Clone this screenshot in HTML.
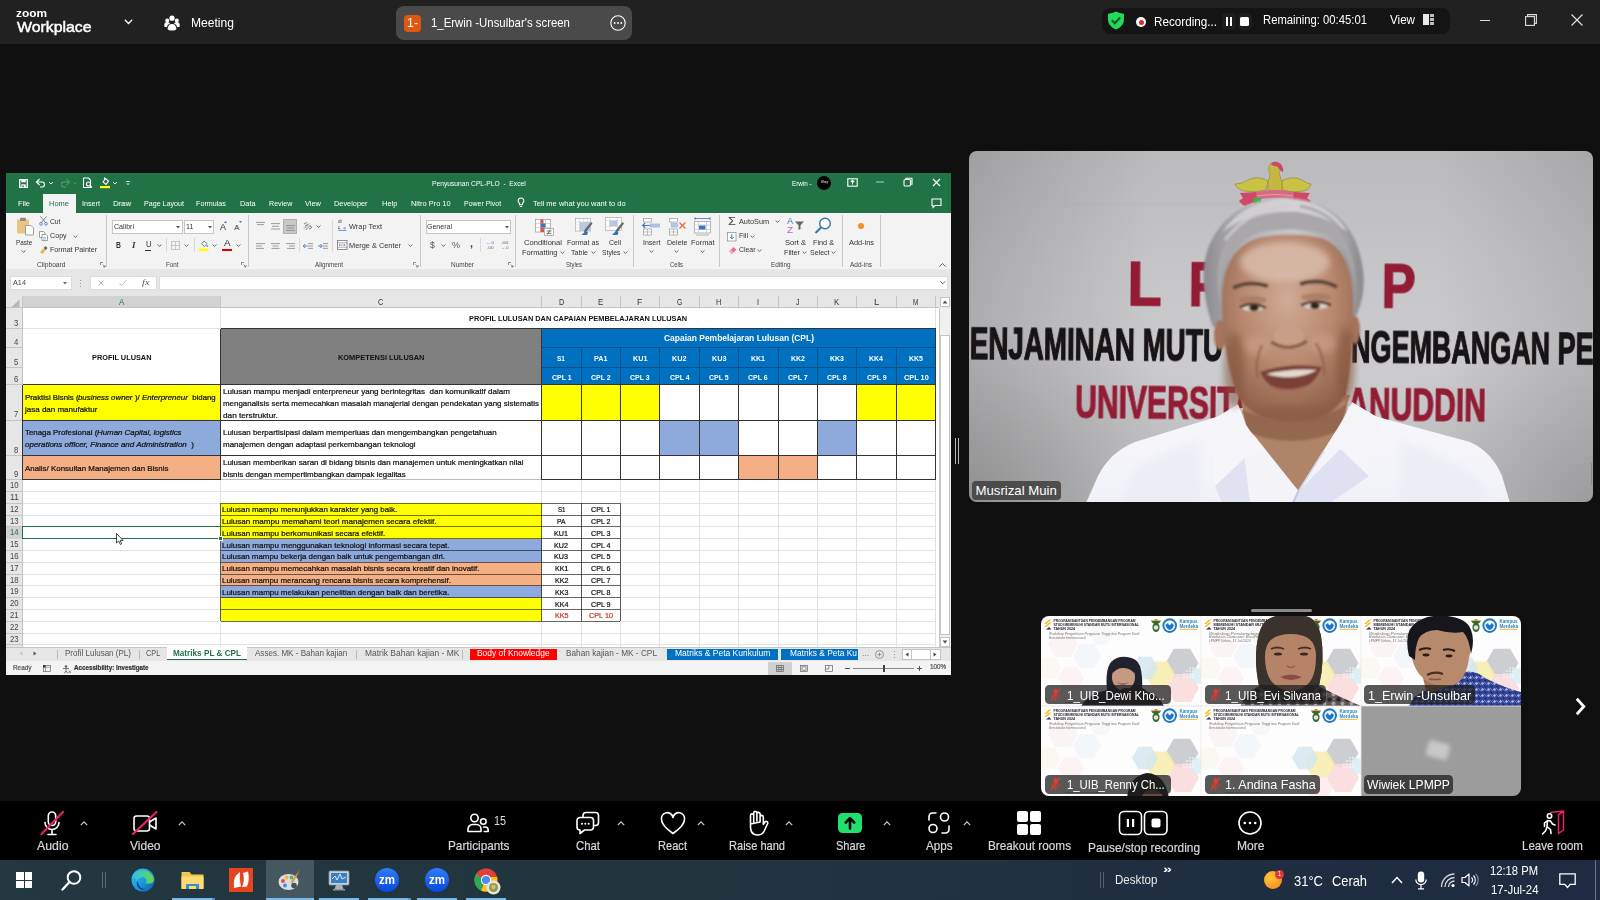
<!DOCTYPE html>
<html lang="en">
<head>
<meta charset="utf-8">
<title>Zoom Workplace</title>
<style>
*{box-sizing:border-box;margin:0;padding:0}
html,body{width:1600px;height:900px;overflow:hidden;background:#0f0f0f;font-family:"Liberation Sans",sans-serif;color:#fff}
.abs{position:absolute}
.t{position:absolute;white-space:pre;line-height:1}
svg{overflow:visible}
</style>
</head>
<body>
<!-- top -->
<div class="abs" style="left:0.0px;top:0.0px;width:1600.0px;height:44.0px;background:#212121;"></div>
<span class="t" style="left:16.0px;top:7.7px;font-size:11.5px;color:#fff;font-weight:bold;transform:scaleX(1.032);transform-origin:0 50%;">zoom</span>
<span class="t" style="left:16.5px;top:20.2px;font-size:14.5px;color:#fff;transform:scaleX(1.092);transform-origin:0 50%;-webkit-text-stroke:0.45px #fff;">Workplace</span>
<svg class="abs" style="left:123.5px;top:19.0px;" width="9" height="6" viewBox="0 0 9 6"><path d="M0.800 0.800l3.700 3.700 3.700-3.700" stroke="#fff" fill="none" stroke-width="1.300"/></svg>
<svg class="abs" style="left:164.0px;top:15.0px;" width="16" height="16" viewBox="0 0 16 16"><g fill="#fff"><circle cx="8" cy="3.200" r="2.600"/><circle cx="3.200" cy="5.400" r="2"/><circle cx="12.800" cy="5.400" r="2"/><path d="M0.400 10.500a2.800 2.800 0 0 1 5.600-1.200h-1.500q-1.500 1.200-1.500 2.700h-2.600zM15.600 10.500a2.800 2.800 0 0 0-5.600-1.200h1.500q1.500 1.200 1.500 2.700h2.600z"/><path d="M3.600 13.500a4.400 4.400 0 0 1 8.800 0q0 2-4.400 2t-4.400-2z"/></g></svg>
<span class="t" style="left:191.0px;top:15.5px;font-size:13.6px;color:#fff;transform:scaleX(0.889);transform-origin:0 50%;">Meeting</span>
<div class="abs" style="left:396px;top:6px;width:236px;height:34px;border-radius:8px;background:#4a4a4a"></div>
<div class="abs" style="left:404px;top:15px;width:17px;height:17px;border-radius:4px;background:#e0570f"></div>
<span class="t" style="left:407.0px;top:17.0px;font-size:12px;color:#fff;transform:scaleX(1.031);transform-origin:0 50%;">1-</span>
<span class="t" style="left:431.0px;top:15.8px;font-size:13.6px;color:#fff;transform:scaleX(0.838);transform-origin:0 50%;">1_Erwin -Unsulbar's screen</span>
<svg class="abs" style="left:610.0px;top:15.0px;" width="16" height="16" viewBox="0 0 16 16"><circle cx="8" cy="8" r="7.200" stroke="#fff" fill="none" stroke-width="1.100"/><circle cx="4.700" cy="8" r="0.900" fill="#fff"/><circle cx="8" cy="8" r="0.900" fill="#fff"/><circle cx="11.300" cy="8" r="0.900" fill="#fff"/></svg>
<div class="abs" style="left:1102px;top:8px;width:348px;height:26px;border-radius:8px;background:#141414"></div>
<svg class="abs" style="left:1107.0px;top:11.0px;" width="18" height="19" viewBox="0 0 18 19"><path d="M9 0.500q3.500 2 8 2.200v5.800q0 6.500-8 10q-8-3.500-8-10v-5.800q4.500-0.200 8-2.200z" fill="#23d959"/><path d="M4.800 9.300l3 3 5.400-5.800" stroke="#0e5a26" stroke-width="2" fill="none"/></svg>
<div class="abs" style="left:1136px;top:17px;width:10px;height:10px;border-radius:50%;background:#fff"></div>
<div class="abs" style="left:1138.500px;top:19.500px;width:5px;height:5px;border-radius:50%;background:#e02828"></div>
<span class="t" style="left:1154.0px;top:15.1px;font-size:13.5px;color:#fff;transform:scaleX(0.866);transform-origin:0 50%;">Recording...</span>
<div class="abs" style="left:1221.500px;top:13px;width:14px;height:17px;border-radius:4px;background:#1d1d1d"></div>
<div class="abs" style="left:1225.7px;top:17.0px;width:2.3px;height:9.0px;background:#fff;"></div>
<div class="abs" style="left:1230.0px;top:17.0px;width:2.3px;height:9.0px;background:#fff;"></div>
<div class="abs" style="left:1237.500px;top:13px;width:14px;height:17px;border-radius:4px;background:#1d1d1d"></div>
<div class="abs" style="left:1240.300px;top:17.300px;width:8.500px;height:8.500px;border-radius:1.500px;background:#fff"></div>
<span class="t" style="left:1263.0px;top:14.3px;font-size:12.6px;color:#fff;transform:scaleX(0.894);transform-origin:0 50%;">Remaining: 00:45:01</span>
<span class="t" style="left:1390.0px;top:14.3px;font-size:12.6px;color:#fff;transform:scaleX(0.923);transform-origin:0 50%;">View</span>
<svg class="abs" style="left:1423.0px;top:14.0px;" width="11" height="11" viewBox="0 0 11 11"><rect x="0" y="0" width="6" height="11" fill="#e8e8e8"/><g fill="#bdbdbd"><rect x="7" y="0" width="4" height="3"/><rect x="7" y="4" width="4" height="3"/><rect x="7" y="8" width="4" height="3"/></g></svg>
<div class="abs" style="left:1480.0px;top:19.5px;width:10.0px;height:1.2px;background:#ddd;"></div>
<svg class="abs" style="left:1525.0px;top:14.0px;" width="12" height="12" viewBox="0 0 12 12"><rect x="0.600" y="2.600" width="8.800" height="8.800" stroke="#ddd" fill="none" stroke-width="1.100"/><path d="M2.600 2.600v-2h8.800v8.800h-2" stroke="#ddd" fill="none" stroke-width="1.100"/></svg>
<svg class="abs" style="left:1571.0px;top:14.0px;" width="12" height="12" viewBox="0 0 12 12"><path d="M0.500 0.500l11 11M11.500 0.500l-11 11" stroke="#ddd" stroke-width="1.200"/></svg>
<!-- excel1 -->
<div class="abs" style="left:6.0px;top:173.0px;width:945.0px;height:502.0px;background:#fff;"></div>
<div class="abs" style="left:6.0px;top:173.0px;width:945.0px;height:40.0px;background:#217346;"></div>
<div class="abs" style="left:6.0px;top:213.0px;width:945.0px;height:56.0px;background:#f3f3f3;"></div>
<div class="abs" style="left:6.0px;top:269.0px;width:945.0px;height:27.0px;background:#e6e6e6;"></div>
<svg class="abs" style="left:18.5px;top:178.5px;" width="10" height="9" viewBox="0 0 10 9"><path d="M0.700 0.700h7.600v7.600h-7.600z" stroke="#fff" fill="none" stroke-width="1.300"/><rect x="2.300" y="0.700" width="4.400" height="2.600" fill="#fff"/><rect x="2.300" y="5.300" width="4.400" height="3" fill="#fff"/><rect x="3.400" y="6.300" width="1.300" height="2" fill="#217346"/></svg>
<svg class="abs" style="left:35.0px;top:178.0px;" width="12" height="10" viewBox="0 0 12 10"><path d="M1.5 4h5.5a2.5 2.5 0 0 1 0 5h-2" stroke="#fff" fill="none" stroke-width="1.1" stroke-width="1.4"/><path d="M4.5 1l-3 3 3 3" stroke="#fff" fill="none" stroke-width="1.1" stroke-width="1.4"/></svg>
<svg class="abs" style="left:48.0px;top:181.0px;" width="6" height="4" viewBox="0 0 6 4"><path d="M1 1l2 2 2-2" stroke="#fff" fill="none" stroke-width="0.9"/></svg>
<svg class="abs" style="left:59.0px;top:178.0px;" width="12" height="10" viewBox="0 0 12 10"><path d="M10.500 4h-5.500a2.500 2.500 0 0 0 0 5h2" stroke="#4c9068" fill="none" stroke-width="1.400"/><path d="M7.500 1l3 3-3 3" stroke="#4c9068" fill="none" stroke-width="1.4"/></svg>
<svg class="abs" style="left:72.0px;top:181.0px;" width="6" height="4" viewBox="0 0 6 4"><path d="M1 1l2 2 2-2" stroke="#4c9068" fill="none" stroke-width="0.9"/></svg>
<svg class="abs" style="left:82.0px;top:177.0px;" width="12" height="12" viewBox="0 0 12 12"><path d="M1.500 1h5l2 2v7.500h-7z" stroke="#fff" fill="none" stroke-width="1.1"/><circle cx="6.500" cy="7" r="2" stroke="#fff" fill="none" stroke-width="1.1"/><path d="M8 8.500l2 2" stroke="#fff" fill="none" stroke-width="1.1"/></svg>
<svg class="abs" style="left:99.0px;top:176.0px;" width="12" height="13" viewBox="0 0 12 13"><path d="M4 6l2.500-3.500 3 2.500-2.500 3.500z" stroke="#fff" fill="none" stroke-width="1.1"/><path d="M5.500 3.500v-2" stroke="#fff" fill="none" stroke-width="1.1"/><rect x="1" y="10" width="10" height="2.200" fill="#ffff00"/></svg>
<svg class="abs" style="left:112.0px;top:181.0px;" width="6" height="4" viewBox="0 0 6 4"><path d="M1 1l2 2 2-2" stroke="#fff" fill="none" stroke-width="0.9"/></svg>
<svg class="abs" style="left:125.0px;top:180.0px;" width="6" height="6" viewBox="0 0 6 6"><path d="M1 1.500h4" stroke="#fff" stroke-width="0.9"/><path d="M1.500 3.500l1.500 1.500 1.500-1.500z" fill="#fff"/></svg>
<span class="t" style="left:431.5px;top:180.1px;font-size:7.5px;color:#fff;transform:scaleX(0.892);transform-origin:0 50%;">Penyusunan CPL-PLO  -  Excel</span>
<span class="t" style="left:791.5px;top:179.9px;font-size:7.5px;color:#fff;transform:scaleX(0.836);transform-origin:0 50%;">Erwin -</span>
<div class="abs" style="left:817px;top:176px;width:14px;height:14px;border-radius:50%;background:#000"></div>
<span class="t" style="left:820.5px;top:182.1px;font-size:2.6px;color:#fff;font-style:italic;transform:scaleX(0.989);transform-origin:0 50%;">Wowy</span>
<svg class="abs" style="left:847.0px;top:178.0px;" width="11" height="9" viewBox="0 0 11 9"><rect x="0.8" y="0.8" width="9.4" height="7.4" stroke="#fff" fill="none" stroke-width="1.1"/><path d="M5.500 6.500v-4M3.800 4l1.700-1.700 1.700 1.700" stroke="#fff" fill="none" stroke-width="1.1"/></svg>
<svg class="abs" style="left:876.0px;top:181.0px;" width="8" height="2" viewBox="0 0 8 2"><path d="M0 1h8" stroke="#9cc4ae" stroke-width="1.2"/></svg>
<svg class="abs" style="left:903.0px;top:177.0px;" width="10" height="10" viewBox="0 0 10 10"><rect x="1" y="2.500" width="6.500" height="6.500" rx="1.200" stroke="#fff" fill="none" stroke-width="1.1"/><path d="M3 2.500v-1.200h6v6h-1.500" stroke="#fff" fill="none" stroke-width="1.1"/></svg>
<svg class="abs" style="left:932.0px;top:178.0px;" width="9" height="9" viewBox="0 0 9 9"><path d="M1 1l7 7M8 1l-7 7" stroke="#fff" stroke-width="1.1"/></svg>
<svg class="abs" style="left:931.0px;top:198.0px;" width="11" height="11" viewBox="0 0 11 11"><path d="M1 1h9v6.500h-6l-2 2v-2h-1z" stroke="#fff" fill="none" stroke-width="1.1" stroke-width="0.9"/></svg>
<div class="abs" style="left:43.0px;top:194.0px;width:33.0px;height:19.0px;background:#f3f3f3;"></div>
<span class="t" style="left:18.0px;top:200.0px;font-size:7.7px;color:#fff;transform:scaleX(0.967);transform-origin:0 50%;">File</span>
<span class="t" style="left:49.0px;top:200.0px;font-size:7.7px;color:#217346;transform:scaleX(0.974);transform-origin:0 50%;">Home</span>
<span class="t" style="left:82.0px;top:200.0px;font-size:7.7px;color:#fff;transform:scaleX(0.935);transform-origin:0 50%;">Insert</span>
<span class="t" style="left:113.0px;top:200.0px;font-size:7.7px;color:#fff;">Draw</span>
<span class="t" style="left:144.0px;top:200.0px;font-size:7.7px;color:#fff;transform:scaleX(0.925);transform-origin:0 50%;">Page Layout</span>
<span class="t" style="left:196.0px;top:200.0px;font-size:7.7px;color:#fff;transform:scaleX(0.935);transform-origin:0 50%;">Formulas</span>
<span class="t" style="left:239.6px;top:200.0px;font-size:7.7px;color:#fff;transform:scaleX(0.959);transform-origin:0 50%;">Data</span>
<span class="t" style="left:268.7px;top:200.0px;font-size:7.7px;color:#fff;transform:scaleX(0.927);transform-origin:0 50%;">Review</span>
<span class="t" style="left:305.0px;top:200.0px;font-size:7.7px;color:#fff;transform:scaleX(0.967);transform-origin:0 50%;">View</span>
<span class="t" style="left:334.4px;top:200.0px;font-size:7.7px;color:#fff;transform:scaleX(0.957);transform-origin:0 50%;">Developer</span>
<span class="t" style="left:381.5px;top:200.0px;font-size:7.7px;color:#fff;transform:scaleX(0.979);transform-origin:0 50%;">Help</span>
<span class="t" style="left:410.5px;top:200.0px;font-size:7.7px;color:#fff;transform:scaleX(0.966);transform-origin:0 50%;">Nitro Pro 10</span>
<span class="t" style="left:463.6px;top:200.0px;font-size:7.7px;color:#fff;transform:scaleX(0.905);transform-origin:0 50%;">Power Pivot</span>
<span class="t" style="left:533.2px;top:200.0px;font-size:7.7px;color:#fff;transform:scaleX(0.977);transform-origin:0 50%;">Tell me what you want to do</span>
<svg class="abs" style="left:517.0px;top:197.0px;" width="8" height="12" viewBox="0 0 8 12"><path d="M4 1a2.800 2.800 0 0 0-1.500 5.200v1.500h3v-1.500a2.800 2.800 0 0 0-1.500-5.200zM2.800 9.500h2.400" stroke="#fff" fill="none" stroke-width="1.1" stroke-width="0.9"/></svg>
<!-- excel2 -->
<svg class="abs" style="left:16.0px;top:217.0px;" width="19" height="19" viewBox="0 0 19 19"><rect x="1" y="2.500" width="12" height="14" rx="1" fill="#e8c580"/><rect x="4" y="0.800" width="6" height="3.200" rx="0.800" fill="#8c8c8c"/><path d="M9.500 8.500h5.500l2.500 2.500v7h-8z" fill="#fff" stroke="#8a8a8a" stroke-width="0.8"/></svg>
<span class="t" style="left:15.7px;top:238.7px;font-size:8.0px;color:#333;transform:scaleX(0.797);transform-origin:0 50%;">Paste</span>
<svg class="abs" style="left:20.7px;top:250.0px;" width="5" height="3" viewBox="0 0 5 3"><path d="M0.600 0.500l1.900 1.900 1.900-1.900" stroke="#555" fill="none" stroke-width="0.9"/></svg>
<svg class="abs" style="left:39.0px;top:216.0px;" width="9" height="10" viewBox="0 0 9 10"><path d="M1.500 0.500l5 6M7.500 0.500l-5 6" stroke="#666" stroke-width="0.8" fill="none"/><circle cx="2" cy="7.800" r="1.400" stroke="#4472c4" fill="none" stroke-width="0.8"/><circle cx="7" cy="7.800" r="1.400" stroke="#4472c4" fill="none" stroke-width="0.8"/></svg>
<span class="t" style="left:50.3px;top:217.8px;font-size:8.0px;color:#333;transform:scaleX(0.843);transform-origin:0 50%;">Cut</span>
<svg class="abs" style="left:39.0px;top:231.0px;" width="9" height="10" viewBox="0 0 9 10"><path d="M0.500 0.500h4l1.500 1.500v4.500h-5.500z" stroke="#777" fill="#fff" stroke-width="0.7"/><path d="M3 3.500h4l1.500 1.500v4.500h-5.500z" stroke="#777" fill="#fff" stroke-width="0.7"/><path d="M4 6.500h3M4 8h3" stroke="#4472c4" stroke-width="0.5"/></svg>
<span class="t" style="left:50.3px;top:232.2px;font-size:8.0px;color:#333;transform:scaleX(0.894);transform-origin:0 50%;">Copy</span>
<svg class="abs" style="left:72.8px;top:234.5px;" width="5" height="3" viewBox="0 0 5 3"><path d="M0.600 0.500l1.900 1.900 1.900-1.900" stroke="#555" fill="none" stroke-width="0.9"/></svg>
<svg class="abs" style="left:39.0px;top:245.0px;" width="9" height="9" viewBox="0 0 9 9"><path d="M1 7.500l3-4 2.500 2-3 3.500z" fill="#e8b64c"/><path d="M4.500 3l2-2 2 2-1.800 2.200z" fill="#666"/></svg>
<span class="t" style="left:50.3px;top:246.4px;font-size:8.0px;color:#333;transform:scaleX(0.892);transform-origin:0 50%;">Format Painter</span>
<span class="t" style="left:36.7px;top:260.8px;font-size:7.3px;color:#444;transform:scaleX(0.912);transform-origin:0 50%;">Clipboard</span>
<svg class="abs" style="left:99.5px;top:262.0px;" width="6" height="6" viewBox="0 0 6 6"><path d="M0.500 3v-2.500h2.500M2.500 2.500l2.500 2.500M5 3v2h-2" stroke="#666" fill="none" stroke-width="0.7"/></svg>
<div class="abs" style="left:106.0px;top:215.0px;width:1.0px;height:52.0px;background:#c8c8c8;"></div>
<div class="abs" style="left:112px;top:219.500px;width:70.500px;height:14px;background:#fff;border:1px solid #c6c6c6"></div>
<span class="t" style="left:114.0px;top:222.7px;font-size:8.0px;color:#333;transform:scaleX(0.882);transform-origin:0 50%;">Calibri</span>
<svg class="abs" style="left:175.8px;top:225.5px;" width="4" height="2.5" viewBox="0 0 4 2.5"><path d="M0 0h4l-2 2.500z" fill="#555"/></svg>
<div class="abs" style="left:184px;top:219.500px;width:30px;height:14px;background:#fff;border:1px solid #c6c6c6"></div>
<span class="t" style="left:186.0px;top:222.7px;font-size:8.0px;color:#333;transform:scaleX(0.879);transform-origin:0 50%;">11</span>
<svg class="abs" style="left:207.5px;top:225.5px;" width="4" height="2.5" viewBox="0 0 4 2.5"><path d="M0 0h4l-2 2.500z" fill="#555"/></svg>
<span class="t" style="left:219.5px;top:222.9px;font-size:8.5px;color:#333;transform:scaleX(1.058);transform-origin:0 50%;">A</span>
<svg class="abs" style="left:224.0px;top:220.5px;" width="3" height="2" viewBox="0 0 3 2"><path d="M0 2l1.500-2 1.500 2z" fill="#4472c4"/></svg>
<span class="t" style="left:234.3px;top:223.7px;font-size:7.5px;color:#333;">A</span>
<svg class="abs" style="left:238.5px;top:221.0px;" width="3" height="2" viewBox="0 0 3 2"><path d="M0 0l1.500 2 1.500-2z" fill="#4472c4"/></svg>
<span class="t" style="left:115.7px;top:241.6px;font-size:8.2px;color:#333;font-weight:bold;transform:scaleX(0.827);transform-origin:0 50%;">B</span>
<span class="t" style="left:131.5px;top:241.4px;font-size:8.5px;color:#333;font-weight:bold;font-style:italic;font-family:'Liberation Serif',serif;transform:scaleX(1.058);transform-origin:0 50%;">I</span>
<span class="t" style="left:145.5px;top:241.3px;font-size:8.2px;color:#333;transform:scaleX(0.929);transform-origin:0 50%;">U</span>
<div class="abs" style="left:145.3px;top:250.0px;width:6.0px;height:0.8px;background:#333;"></div>
<svg class="abs" style="left:156.8px;top:244.2px;" width="5" height="3" viewBox="0 0 5 3"><path d="M0.600 0.500l1.900 1.900 1.900-1.900" stroke="#555" fill="none" stroke-width="0.9"/></svg>
<div class="abs" style="left:166.0px;top:238.0px;width:0.8px;height:14.0px;background:#d8d8d8;"></div>
<svg class="abs" style="left:171.0px;top:240.5px;" width="9" height="9" viewBox="0 0 9 9"><rect x="0.400" y="0.400" width="8.200" height="8.200" stroke="#bbb" fill="none" stroke-width="0.8"/><path d="M4.500 0.400v8.200M0.400 4.500h8.200" stroke="#bbb" stroke-width="0.8"/></svg>
<svg class="abs" style="left:184.0px;top:244.2px;" width="5" height="3" viewBox="0 0 5 3"><path d="M0.600 0.500l1.900 1.900 1.900-1.900" stroke="#555" fill="none" stroke-width="0.9"/></svg>
<div class="abs" style="left:194.0px;top:238.0px;width:0.8px;height:14.0px;background:#d8d8d8;"></div>
<svg class="abs" style="left:198.0px;top:239.0px;" width="11" height="13" viewBox="0 0 11 13"><path d="M3.500 5l2.500-3 3 2.500-2.500 3z" stroke="#666" fill="#fff" stroke-width="0.8"/><path d="M9 5.500q1.500 2 0 2.500q-1.200-0.500 0-2.500z" fill="#4472c4"/><rect x="0.500" y="9.500" width="10" height="2.400" fill="#ffff00"/></svg>
<svg class="abs" style="left:211.7px;top:244.2px;" width="5" height="3" viewBox="0 0 5 3"><path d="M0.600 0.500l1.900 1.900 1.900-1.900" stroke="#555" fill="none" stroke-width="0.9"/></svg>
<span class="t" style="left:224.0px;top:239.2px;font-size:8.5px;color:#333;transform:scaleX(1.164);transform-origin:0 50%;">A</span>
<div class="abs" style="left:222.3px;top:248.5px;width:10.0px;height:2.4px;background:#e00000;"></div>
<svg class="abs" style="left:235.8px;top:244.2px;" width="5" height="3" viewBox="0 0 5 3"><path d="M0.600 0.500l1.900 1.900 1.900-1.900" stroke="#555" fill="none" stroke-width="0.9"/></svg>
<span class="t" style="left:165.6px;top:260.8px;font-size:7.3px;color:#444;transform:scaleX(0.863);transform-origin:0 50%;">Font</span>
<svg class="abs" style="left:241.0px;top:262.0px;" width="6" height="6" viewBox="0 0 6 6"><path d="M0.500 3v-2.500h2.500M2.500 2.500l2.500 2.500M5 3v2h-2" stroke="#666" fill="none" stroke-width="0.7"/></svg>
<div class="abs" style="left:248.0px;top:215.0px;width:1.0px;height:52.0px;background:#c8c8c8;"></div>
<svg class="abs" style="left:256.0px;top:220.0px;" width="9" height="12" viewBox="0 0 9 12"><path d="M0 2.400h9M1 4.600h7" stroke="#858585" stroke-width="0.8"/></svg>
<svg class="abs" style="left:271.0px;top:220.0px;" width="9" height="12" viewBox="0 0 9 12"><path d="M0 3.600h9M1 6.300h7M0 9h9" stroke="#858585" stroke-width="0.8"/></svg>
<div class="abs" style="left:283.0px;top:219.0px;width:14.0px;height:14.5px;background:#c8c8c8;border:1px solid #b0b0b0"></div>
<svg class="abs" style="left:285.5px;top:220.0px;" width="9" height="12" viewBox="0 0 9 12"><path d="M0 5.600h9M1 8h7M0 10.400h9" stroke="#858585" stroke-width="0.8"/></svg>
<svg class="abs" style="left:303.0px;top:221.0px;" width="10" height="10" viewBox="0 0 10 10"><path d="M1 7.500l5-5M2.500 9l5-5M1 3l3-1.500M2 5l3-1.500" stroke="#666" stroke-width="0.8"/><path d="M6 8l3-1.500-2.500-1.500" fill="none" stroke="#666" stroke-width="0.8"/></svg>
<svg class="abs" style="left:315.5px;top:225.0px;" width="5" height="3" viewBox="0 0 5 3"><path d="M0.600 0.500l1.900 1.900 1.900-1.900" stroke="#555" fill="none" stroke-width="0.9"/></svg>
<svg class="abs" style="left:256.0px;top:241.0px;" width="9" height="9" viewBox="0 0 9 9"><path d="M0 2.600h9M0 5h6M0 7.400h8" stroke="#858585" stroke-width="0.8"/></svg>
<svg class="abs" style="left:271.0px;top:241.0px;" width="9" height="9" viewBox="0 0 9 9"><path d="M0 2.600h9M1.500 5h6M0.500 7.400h8" stroke="#858585" stroke-width="0.8"/></svg>
<svg class="abs" style="left:286.0px;top:241.0px;" width="9" height="9" viewBox="0 0 9 9"><path d="M0 2.600h9M3 5h6M1 7.400h8" stroke="#858585" stroke-width="0.8"/></svg>
<div class="abs" style="left:299.0px;top:238.0px;width:0.8px;height:14.0px;background:#d8d8d8;"></div>
<svg class="abs" style="left:303.0px;top:241.0px;" width="10" height="9" viewBox="0 0 10 9"><path d="M5 2.600h5M5 5h5M5 7.400h5" stroke="#858585" stroke-width="0.8"/><path d="M4.500 5h-4M2.200 3l-2 2 2 2" stroke="#4472c4" fill="none" stroke-width="0.9"/></svg>
<svg class="abs" style="left:318.0px;top:241.0px;" width="10" height="9" viewBox="0 0 10 9"><path d="M5 2.600h5M5 5h5M5 7.400h5" stroke="#858585" stroke-width="0.8"/><path d="M0 5h4M2.300 3l2 2-2 2" stroke="#4472c4" fill="none" stroke-width="0.9"/></svg>
<div class="abs" style="left:332.0px;top:220.0px;width:0.8px;height:32.0px;background:#d8d8d8;"></div>
<svg class="abs" style="left:337.5px;top:221.0px;" width="9" height="10" viewBox="0 0 9 10"><path d="M0.500 9.500h8" stroke="#4472c4" stroke-width="0.7"/><path d="M5 7.200h2.500M6.300 6l1.300 1.200-1.300 1.200M0.500 6.500v1.400h2" stroke="#4472c4" stroke-width="0.6" fill="none"/></svg>
<span class="t" style="left:338.0px;top:220.3px;font-size:4.5px;color:#555;transform:scaleX(0.799);transform-origin:0 50%;">ab</span>
<span class="t" style="left:338.0px;top:225.6px;font-size:4.5px;color:#555;transform:scaleX(0.889);transform-origin:0 50%;">c</span>
<span class="t" style="left:349.0px;top:222.9px;font-size:8.0px;color:#333;transform:scaleX(0.924);transform-origin:0 50%;">Wrap Text</span>
<svg class="abs" style="left:337.0px;top:240.0px;" width="10.5" height="10" viewBox="0 0 10.5 10"><rect x="0.400" y="0.400" width="9.600" height="9" stroke="#777" fill="#fff" stroke-width="0.8"/><path d="M0.400 2.800h9.600M0.400 7.200h9.600" stroke="#777" stroke-width="0.6"/><path d="M2 5h6M3 4l-1 1 1 1M7 4l1 1-1 1" stroke="#4472c4" stroke-width="0.6" fill="none"/></svg>
<span class="t" style="left:349.0px;top:241.9px;font-size:8.0px;color:#333;transform:scaleX(0.921);transform-origin:0 50%;">Merge &amp; Center</span>
<svg class="abs" style="left:407.5px;top:244.2px;" width="5" height="3" viewBox="0 0 5 3"><path d="M0.600 0.500l1.900 1.900 1.900-1.900" stroke="#555" fill="none" stroke-width="0.9"/></svg>
<span class="t" style="left:315.0px;top:260.8px;font-size:7.3px;color:#444;transform:scaleX(0.863);transform-origin:0 50%;">Alignment</span>
<svg class="abs" style="left:413.0px;top:262.0px;" width="6" height="6" viewBox="0 0 6 6"><path d="M0.500 3v-2.500h2.500M2.500 2.500l2.500 2.500M5 3v2h-2" stroke="#666" fill="none" stroke-width="0.7"/></svg>
<div class="abs" style="left:420.0px;top:215.0px;width:1.0px;height:52.0px;background:#c8c8c8;"></div>
<div class="abs" style="left:425.500px;top:219.500px;width:85.500px;height:14px;background:#fff;border:1px solid #c6c6c6"></div>
<span class="t" style="left:427.0px;top:222.7px;font-size:8.0px;color:#333;transform:scaleX(0.878);transform-origin:0 50%;">General</span>
<svg class="abs" style="left:504.5px;top:225.5px;" width="4" height="2.5" viewBox="0 0 4 2.5"><path d="M0 0h4l-2 2.500z" fill="#555"/></svg>
<span class="t" style="left:429.5px;top:241.2px;font-size:9px;color:#555;transform:scaleX(0.959);transform-origin:0 50%;">$</span>
<svg class="abs" style="left:440.5px;top:244.2px;" width="5" height="3" viewBox="0 0 5 3"><path d="M0.600 0.500l1.900 1.900 1.900-1.900" stroke="#555" fill="none" stroke-width="0.9"/></svg>
<span class="t" style="left:452.0px;top:241.4px;font-size:8.5px;color:#555;transform:scaleX(1.059);transform-origin:0 50%;">%</span>
<span class="t" style="left:469.5px;top:238.7px;font-size:10px;color:#444;font-weight:bold;transform:scaleX(1.080);transform-origin:0 50%;">,</span>
<div class="abs" style="left:480.0px;top:238.0px;width:0.8px;height:14.0px;background:#d8d8d8;"></div>
<span class="t" style="left:485.6px;top:241.3px;font-size:4.2px;color:#4472c4;transform:scaleX(1.026);transform-origin:0 50%;">←.0</span>
<span class="t" style="left:487.0px;top:246.0px;font-size:4.2px;color:#666;transform:scaleX(1.113);transform-origin:0 50%;">.00</span>
<span class="t" style="left:500.5px;top:241.3px;font-size:4.2px;color:#666;transform:scaleX(1.285);transform-origin:0 50%;">.00</span>
<span class="t" style="left:500.5px;top:246.0px;font-size:4.2px;color:#4472c4;transform:scaleX(0.974);transform-origin:0 50%;">→.0</span>
<span class="t" style="left:451.0px;top:260.8px;font-size:7.3px;color:#444;transform:scaleX(0.886);transform-origin:0 50%;">Number</span>
<svg class="abs" style="left:508.0px;top:262.0px;" width="6" height="6" viewBox="0 0 6 6"><path d="M0.500 3v-2.500h2.500M2.500 2.500l2.500 2.500M5 3v2h-2" stroke="#666" fill="none" stroke-width="0.7"/></svg>
<div class="abs" style="left:515.0px;top:215.0px;width:1.0px;height:52.0px;background:#c8c8c8;"></div>
<svg class="abs" style="left:535.0px;top:219.0px;" width="19" height="17" viewBox="0 0 19 17"><rect x="0.500" y="0.500" width="15" height="12.500" fill="#fff" stroke="#999" stroke-width="0.7"/><path d="M0.500 4.500h15M0.500 8.500h15M5.500 0.500v12.500M10.500 0.500v12.500" stroke="#bbb" stroke-width="0.6"/><rect x="5.500" y="0.500" width="3" height="4" fill="#d9534f"/><rect x="5.500" y="4.500" width="5" height="4" fill="#4472c4"/><rect x="5.500" y="8.500" width="3.500" height="4.500" fill="#d9534f"/><rect x="9.500" y="9.500" width="9" height="7" fill="#fff" stroke="#999" stroke-width="0.7"/><path d="M11.500 12h5M11.500 14.300h5M15.500 10.500l-3 5" stroke="#444" stroke-width="0.7"/></svg>
<span class="t" style="left:524.0px;top:238.9px;font-size:8.0px;color:#333;transform:scaleX(0.949);transform-origin:0 50%;">Conditional</span>
<span class="t" style="left:521.5px;top:248.5px;font-size:8.0px;color:#333;transform:scaleX(0.928);transform-origin:0 50%;">Formatting</span>
<svg class="abs" style="left:559.5px;top:251.0px;" width="5" height="3" viewBox="0 0 5 3"><path d="M0.600 0.500l1.900 1.900 1.900-1.900" stroke="#555" fill="none" stroke-width="0.9"/></svg>
<svg class="abs" style="left:575.0px;top:218.0px;" width="19" height="18" viewBox="0 0 19 18"><rect x="0.500" y="0.500" width="15" height="12.500" fill="#fff" stroke="#aaa" stroke-width="0.7"/><rect x="4.500" y="4" width="11" height="9" fill="#b4c7e7"/><path d="M0.500 4h15M0.500 7h15M0.500 10h15M4.500 0.500v12.500M8.500 0.500v12.500M12.500 0.500v12.500" stroke="#ccc" stroke-width="0.5"/><path d="M17.500 5.500l-6 8-2.500 1 0.500-2.500 6.500-8z" fill="#666"/><path d="M6.500 17l4.500-4.500 2 2-1 2.500z" fill="#2f75b5"/></svg>
<span class="t" style="left:567.0px;top:238.9px;font-size:8.0px;color:#333;transform:scaleX(0.889);transform-origin:0 50%;">Format as</span>
<span class="t" style="left:571.0px;top:248.5px;font-size:8.0px;color:#333;transform:scaleX(0.889);transform-origin:0 50%;">Table</span>
<svg class="abs" style="left:590.5px;top:251.0px;" width="5" height="3" viewBox="0 0 5 3"><path d="M0.600 0.500l1.900 1.900 1.900-1.900" stroke="#555" fill="none" stroke-width="0.9"/></svg>
<svg class="abs" style="left:605.0px;top:217.0px;" width="20" height="19" viewBox="0 0 20 19"><rect x="0.500" y="0.500" width="16" height="13" fill="#fff" stroke="#aaa" stroke-width="0.7"/><rect x="4.500" y="3.500" width="8" height="6" fill="#b4c7e7"/><path d="M0.500 3.500h16M0.500 9.500h16M4.500 0.500v13M12.500 0.500v13" stroke="#ccc" stroke-width="0.5"/><path d="M19 6.500l-6 8-2.500 1 0.500-2.500 6.500-8z" fill="#666"/><path d="M7 18l4.500-4.500 2 2-1 2.500z" fill="#2f75b5"/></svg>
<span class="t" style="left:608.5px;top:238.9px;font-size:8.0px;color:#333;transform:scaleX(0.871);transform-origin:0 50%;">Cell</span>
<span class="t" style="left:601.6px;top:248.5px;font-size:8.0px;color:#333;transform:scaleX(0.845);transform-origin:0 50%;">Styles</span>
<svg class="abs" style="left:622.5px;top:251.0px;" width="5" height="3" viewBox="0 0 5 3"><path d="M0.600 0.500l1.900 1.900 1.900-1.900" stroke="#555" fill="none" stroke-width="0.9"/></svg>
<span class="t" style="left:566.0px;top:260.8px;font-size:7.3px;color:#444;transform:scaleX(0.805);transform-origin:0 50%;">Styles</span>
<div class="abs" style="left:633.0px;top:215.0px;width:1.0px;height:52.0px;background:#c8c8c8;"></div>
<svg class="abs" style="left:642.0px;top:217.5px;" width="18" height="18" viewBox="0 0 18 18"><rect x="1.500" y="0.500" width="8" height="3.500" stroke="#999" fill="#fff" stroke-width="0.7"/><rect x="1.500" y="11" width="8" height="6" stroke="#999" fill="#fff" stroke-width="0.7"/><path d="M1.500 14h8M5.500 11v6" stroke="#999" stroke-width="0.6"/><rect x="8" y="6" width="9.500" height="3" fill="#b4c7e7" stroke="#8faadc" stroke-width="0.6"/><path d="M7.500 7.500h-7M3.200 5l-2.600 2.500 2.600 2.500" stroke="#4472c4" fill="none" stroke-width="1.100"/></svg>
<span class="t" style="left:642.5px;top:238.9px;font-size:8.0px;color:#333;transform:scaleX(0.875);transform-origin:0 50%;">Insert</span>
<svg class="abs" style="left:648.5px;top:250.0px;" width="5" height="3" viewBox="0 0 5 3"><path d="M0.600 0.500l1.900 1.900 1.900-1.900" stroke="#555" fill="none" stroke-width="0.9"/></svg>
<svg class="abs" style="left:669.0px;top:217.5px;" width="18" height="18" viewBox="0 0 18 18"><rect x="0.500" y="0.500" width="8" height="3.500" stroke="#999" fill="#fff" stroke-width="0.7"/><rect x="0.500" y="11" width="8" height="6" stroke="#999" fill="#fff" stroke-width="0.7"/><path d="M0.500 14h8M4.500 11v6" stroke="#999" stroke-width="0.600"/><rect x="2.500" y="5.500" width="6" height="3.500" fill="#b4c7e7" stroke="#8faadc" stroke-width="0.600"/><path d="M10.500 4.500l6 6M16.500 4.500l-6 6" stroke="#e8643c" stroke-width="1.100"/></svg>
<span class="t" style="left:666.5px;top:238.9px;font-size:8.0px;color:#333;transform:scaleX(0.886);transform-origin:0 50%;">Delete</span>
<svg class="abs" style="left:674.0px;top:250.0px;" width="5" height="3" viewBox="0 0 5 3"><path d="M0.600 0.500l1.900 1.900 1.900-1.900" stroke="#555" fill="none" stroke-width="0.9"/></svg>
<svg class="abs" style="left:694.0px;top:217.0px;" width="18" height="19" viewBox="0 0 18 19"><path d="M1 1.500h15M1 0v3M16 0v3" stroke="#4472c4" stroke-width="0.800"/><rect x="0.500" y="4.500" width="16" height="11.500" stroke="#999" fill="#fff" stroke-width="0.7"/><path d="M0.500 8h16M0.500 12.500h16M4.500 4.500v11.500M12.500 4.500v11.500" stroke="#bbb" stroke-width="0.600"/><rect x="5" y="8.500" width="6.500" height="4" fill="#4472c4"/><path d="M2 18h13" stroke="#999" stroke-width="0.700"/></svg>
<span class="t" style="left:690.5px;top:238.9px;font-size:8.0px;color:#333;transform:scaleX(0.928);transform-origin:0 50%;">Format</span>
<svg class="abs" style="left:699.5px;top:250.0px;" width="5" height="3" viewBox="0 0 5 3"><path d="M0.600 0.500l1.900 1.900 1.900-1.900" stroke="#555" fill="none" stroke-width="0.9"/></svg>
<span class="t" style="left:669.5px;top:260.8px;font-size:7.3px;color:#444;transform:scaleX(0.801);transform-origin:0 50%;">Cells</span>
<div class="abs" style="left:719.0px;top:215.0px;width:1.0px;height:52.0px;background:#c8c8c8;"></div>
<span class="t" style="left:727.5px;top:216.3px;font-size:10.5px;color:#444;transform:scaleX(1.233);transform-origin:0 50%;">Σ</span>
<span class="t" style="left:739.0px;top:217.8px;font-size:8.0px;color:#333;transform:scaleX(0.912);transform-origin:0 50%;">AutoSum</span>
<svg class="abs" style="left:774.5px;top:220.2px;" width="5" height="3" viewBox="0 0 5 3"><path d="M0.600 0.500l1.900 1.900 1.900-1.900" stroke="#555" fill="none" stroke-width="0.9"/></svg>
<svg class="abs" style="left:727.0px;top:231.5px;" width="10" height="9.5" viewBox="0 0 10 9.5"><rect x="0.500" y="0.500" width="8.500" height="8.500" fill="#fff" stroke="#888" stroke-width="0.700"/><path d="M4.800 2v4.500M2.800 4.800l2 2 2-2" stroke="#4472c4" fill="none" stroke-width="1"/></svg>
<span class="t" style="left:739.0px;top:232.2px;font-size:8.0px;color:#333;transform:scaleX(0.881);transform-origin:0 50%;">Fill</span>
<svg class="abs" style="left:750.0px;top:234.7px;" width="5" height="3" viewBox="0 0 5 3"><path d="M0.600 0.500l1.900 1.900 1.900-1.900" stroke="#555" fill="none" stroke-width="0.9"/></svg>
<svg class="abs" style="left:727.5px;top:246.0px;" width="9" height="8" viewBox="0 0 9 8"><path d="M1 5.500l4.500-4.500 3 2.500-4.500 4.500z" fill="#e8708a"/><path d="M1 5.500l1.500-1.500 3 2.500-1.500 1.500z" fill="#f4b6c2"/></svg>
<span class="t" style="left:739.0px;top:246.4px;font-size:8.0px;color:#333;transform:scaleX(0.863);transform-origin:0 50%;">Clear</span>
<svg class="abs" style="left:757.0px;top:248.9px;" width="5" height="3" viewBox="0 0 5 3"><path d="M0.600 0.500l1.900 1.900 1.900-1.900" stroke="#555" fill="none" stroke-width="0.9"/></svg>
<span class="t" style="left:787.0px;top:217.2px;font-size:9px;color:#4472c4;">A</span>
<span class="t" style="left:787.0px;top:225.7px;font-size:9px;color:#c060c0;transform:scaleX(1.091);transform-origin:0 50%;">Z</span>
<svg class="abs" style="left:795.0px;top:221.0px;" width="9" height="9" viewBox="0 0 9 9"><path d="M0 0.500h9l-3.500 3.800v4l-2 0.500v-4.500z" fill="#666"/></svg>
<span class="t" style="left:785.0px;top:238.9px;font-size:8.0px;color:#333;transform:scaleX(0.945);transform-origin:0 50%;">Sort &amp;</span>
<span class="t" style="left:784.0px;top:248.5px;font-size:8.0px;color:#333;transform:scaleX(0.900);transform-origin:0 50%;">Filter</span>
<svg class="abs" style="left:802.0px;top:251.0px;" width="5" height="3" viewBox="0 0 5 3"><path d="M0.600 0.500l1.900 1.900 1.900-1.900" stroke="#555" fill="none" stroke-width="0.9"/></svg>
<svg class="abs" style="left:814.0px;top:217.0px;" width="18" height="18" viewBox="0 0 18 18"><circle cx="11" cy="6.500" r="5.300" fill="#fff" stroke="#2f75b5" stroke-width="1.400"/><path d="M7 10.500l-5.500 5.500" stroke="#2f75b5" stroke-width="2"/></svg>
<span class="t" style="left:812.5px;top:238.9px;font-size:8.0px;color:#333;transform:scaleX(0.908);transform-origin:0 50%;">Find &amp;</span>
<span class="t" style="left:810.0px;top:248.5px;font-size:8.0px;color:#333;transform:scaleX(0.877);transform-origin:0 50%;">Select</span>
<svg class="abs" style="left:831.0px;top:251.0px;" width="5" height="3" viewBox="0 0 5 3"><path d="M0.600 0.500l1.900 1.900 1.900-1.900" stroke="#555" fill="none" stroke-width="0.9"/></svg>
<span class="t" style="left:771.0px;top:260.8px;font-size:7.3px;color:#444;transform:scaleX(0.874);transform-origin:0 50%;">Editing</span>
<div class="abs" style="left:842.0px;top:215.0px;width:1.0px;height:52.0px;background:#c8c8c8;"></div>
<div class="abs" style="left:857.500px;top:222.500px;width:6px;height:6px;border-radius:50%;background:#f59121"></div>
<span class="t" style="left:849.0px;top:238.9px;font-size:8.0px;color:#333;transform:scaleX(0.922);transform-origin:0 50%;">Add-ins</span>
<span class="t" style="left:850.0px;top:260.8px;font-size:7.3px;color:#444;transform:scaleX(0.889);transform-origin:0 50%;">Add-ins</span>
<div class="abs" style="left:880.0px;top:215.0px;width:1.0px;height:52.0px;background:#c8c8c8;"></div>
<svg class="abs" style="left:939.0px;top:263.0px;" width="7" height="4" viewBox="0 0 7 4"><path d="M0.500 3.500l3-3 3 3" stroke="#555" fill="none" stroke-width="0.900"/></svg>
<div class="abs" style="left:10px;top:275.500px;width:61.500px;height:14px;background:#fff;border:1px solid #dcdcdc"></div>
<span class="t" style="left:12.5px;top:278.9px;font-size:8.0px;color:#444;transform:scaleX(0.913);transform-origin:0 50%;">A14</span>
<svg class="abs" style="left:63.0px;top:281.7px;" width="4" height="2.5" viewBox="0 0 4 2.5"><path d="M0 0h4l-2 2.500z" fill="#666"/></svg>
<div class="abs" style="left:79.7px;top:279.5px;width:1.0px;height:1.0px;background:#999;"></div>
<div class="abs" style="left:79.7px;top:282.5px;width:1.0px;height:1.0px;background:#999;"></div>
<div class="abs" style="left:79.7px;top:285.5px;width:1.0px;height:1.0px;background:#999;"></div>
<div class="abs" style="left:90px;top:275.500px;width:66.500px;height:14px;background:#fff;border:1px solid #dcdcdc"></div>
<svg class="abs" style="left:97.5px;top:279.5px;" width="6" height="6" viewBox="0 0 6 6"><path d="M0.500 0.500l5 5M5.500 0.500l-5 5" stroke="#aaa" stroke-width="0.800"/></svg>
<svg class="abs" style="left:119.0px;top:279.5px;" width="8" height="6" viewBox="0 0 8 6"><path d="M0.500 3.500l2 2 4.500-5" stroke="#aaa" fill="none" stroke-width="0.800"/></svg>
<span class="t" style="left:141.5px;top:278.1px;font-size:8.5px;color:#555;font-style:italic;font-family:'Liberation Serif',serif;transform:scaleX(1.223);transform-origin:0 50%;">fx</span>
<div class="abs" style="left:158.500px;top:275.500px;width:789px;height:14px;background:#fff;border:1px solid #dcdcdc"></div>
<svg class="abs" style="left:940.0px;top:281.0px;" width="6" height="4" viewBox="0 0 6 4"><path d="M0.500 0.500l2.300 2.300 2.300-2.300" stroke="#555" fill="none" stroke-width="1"/></svg>
<!-- excel3 -->
<div class="abs" style="left:6.0px;top:296.0px;width:945.0px;height:351.0px;background:#fff;"></div>
<div class="abs" style="left:6.0px;top:296.0px;width:945.0px;height:12.0px;background:#e6e6e6;"></div>
<div class="abs" style="left:6.0px;top:296.0px;width:16.5px;height:351.0px;background:#e6e6e6;"></div>
<div class="abs" style="left:22.5px;top:296.0px;width:198.0px;height:11.5px;background:#d2d2d2;"></div>
<div class="abs" style="left:22.5px;top:306.5px;width:198.0px;height:1.2px;background:#217346;"></div>
<svg class="abs" style="left:11.0px;top:299.0px;" width="9" height="8" viewBox="0 0 9 8"><path d="M8.500 0.500v7.500h-8z" fill="#b8b8b8"/></svg>
<span class="t" style="left:118.8px;top:297.9px;font-size:8.3px;color:#217346;transform:scaleX(0.957);transform-origin:0 50%;">A</span>
<div class="abs" style="left:220.0px;top:296.0px;width:1.0px;height:11.3px;background:#c4c4c4;"></div>
<span class="t" style="left:378.4px;top:297.9px;font-size:8.3px;color:#333;transform:scaleX(0.884);transform-origin:0 50%;">C</span>
<div class="abs" style="left:541.0px;top:296.0px;width:1.0px;height:11.3px;background:#c4c4c4;"></div>
<span class="t" style="left:558.6px;top:297.9px;font-size:8.3px;color:#333;transform:scaleX(0.884);transform-origin:0 50%;">D</span>
<div class="abs" style="left:580.5px;top:296.0px;width:1.0px;height:11.3px;background:#c4c4c4;"></div>
<span class="t" style="left:598.1px;top:297.9px;font-size:8.3px;color:#333;transform:scaleX(0.957);transform-origin:0 50%;">E</span>
<div class="abs" style="left:619.9px;top:296.0px;width:1.0px;height:11.3px;background:#c4c4c4;"></div>
<span class="t" style="left:637.4px;top:297.9px;font-size:8.3px;color:#333;transform:scaleX(1.045);transform-origin:0 50%;">F</span>
<div class="abs" style="left:659.2px;top:296.0px;width:1.0px;height:11.3px;background:#c4c4c4;"></div>
<span class="t" style="left:676.8px;top:297.9px;font-size:8.3px;color:#333;transform:scaleX(0.821);transform-origin:0 50%;">G</span>
<div class="abs" style="left:698.6px;top:296.0px;width:1.0px;height:11.3px;background:#c4c4c4;"></div>
<span class="t" style="left:716.1px;top:297.9px;font-size:8.3px;color:#333;transform:scaleX(0.884);transform-origin:0 50%;">H</span>
<div class="abs" style="left:737.9px;top:296.0px;width:1.0px;height:11.3px;background:#c4c4c4;"></div>
<span class="t" style="left:757.2px;top:297.9px;font-size:8.3px;color:#333;transform:scaleX(0.867);transform-origin:0 50%;">I</span>
<div class="abs" style="left:777.5px;top:296.0px;width:1.0px;height:11.3px;background:#c4c4c4;"></div>
<span class="t" style="left:795.9px;top:297.9px;font-size:8.3px;color:#333;transform:scaleX(0.843);transform-origin:0 50%;">J</span>
<div class="abs" style="left:816.8px;top:296.0px;width:1.0px;height:11.3px;background:#c4c4c4;"></div>
<span class="t" style="left:834.3px;top:297.9px;font-size:8.3px;color:#333;transform:scaleX(0.957);transform-origin:0 50%;">K</span>
<div class="abs" style="left:856.1px;top:296.0px;width:1.0px;height:11.3px;background:#c4c4c4;"></div>
<span class="t" style="left:873.8px;top:297.9px;font-size:8.3px;color:#333;transform:scaleX(1.148);transform-origin:0 50%;">L</span>
<div class="abs" style="left:895.7px;top:296.0px;width:1.0px;height:11.3px;background:#c4c4c4;"></div>
<span class="t" style="left:913.2px;top:297.9px;font-size:8.3px;color:#333;transform:scaleX(0.767);transform-origin:0 50%;">M</span>
<div class="abs" style="left:935.0px;top:296.0px;width:1.0px;height:11.3px;background:#c4c4c4;"></div>
<div class="abs" style="left:6.0px;top:306.9px;width:945.0px;height:0.8px;background:#c4c4c4;"></div>
<div class="abs" style="left:220.1px;top:308.0px;width:0.8px;height:339.0px;background:#e2e2e2;"></div>
<div class="abs" style="left:541.1px;top:308.0px;width:0.8px;height:339.0px;background:#e2e2e2;"></div>
<div class="abs" style="left:580.6px;top:308.0px;width:0.8px;height:339.0px;background:#e2e2e2;"></div>
<div class="abs" style="left:620.0px;top:308.0px;width:0.8px;height:339.0px;background:#e2e2e2;"></div>
<div class="abs" style="left:659.3px;top:308.0px;width:0.8px;height:339.0px;background:#e2e2e2;"></div>
<div class="abs" style="left:698.7px;top:308.0px;width:0.8px;height:339.0px;background:#e2e2e2;"></div>
<div class="abs" style="left:738.0px;top:308.0px;width:0.8px;height:339.0px;background:#e2e2e2;"></div>
<div class="abs" style="left:777.6px;top:308.0px;width:0.8px;height:339.0px;background:#e2e2e2;"></div>
<div class="abs" style="left:816.9px;top:308.0px;width:0.8px;height:339.0px;background:#e2e2e2;"></div>
<div class="abs" style="left:856.2px;top:308.0px;width:0.8px;height:339.0px;background:#e2e2e2;"></div>
<div class="abs" style="left:895.8px;top:308.0px;width:0.8px;height:339.0px;background:#e2e2e2;"></div>
<div class="abs" style="left:935.1px;top:308.0px;width:0.8px;height:339.0px;background:#e2e2e2;"></div>
<div class="abs" style="left:22.5px;top:328.1px;width:913.0px;height:0.8px;background:#e2e2e2;"></div>
<div class="abs" style="left:6.0px;top:328.1px;width:16.5px;height:0.8px;background:#c4c4c4;"></div>
<div class="abs" style="left:22.5px;top:347.4px;width:913.0px;height:0.8px;background:#e2e2e2;"></div>
<div class="abs" style="left:6.0px;top:347.4px;width:16.5px;height:0.8px;background:#c4c4c4;"></div>
<div class="abs" style="left:22.5px;top:367.1px;width:913.0px;height:0.8px;background:#e2e2e2;"></div>
<div class="abs" style="left:6.0px;top:367.1px;width:16.5px;height:0.8px;background:#c4c4c4;"></div>
<div class="abs" style="left:22.5px;top:384.1px;width:913.0px;height:0.8px;background:#e2e2e2;"></div>
<div class="abs" style="left:6.0px;top:384.1px;width:16.5px;height:0.8px;background:#c4c4c4;"></div>
<div class="abs" style="left:22.5px;top:420.1px;width:913.0px;height:0.8px;background:#e2e2e2;"></div>
<div class="abs" style="left:6.0px;top:420.1px;width:16.5px;height:0.8px;background:#c4c4c4;"></div>
<div class="abs" style="left:22.5px;top:455.2px;width:913.0px;height:0.8px;background:#e2e2e2;"></div>
<div class="abs" style="left:6.0px;top:455.2px;width:16.5px;height:0.8px;background:#c4c4c4;"></div>
<div class="abs" style="left:22.5px;top:479.2px;width:913.0px;height:0.8px;background:#e2e2e2;"></div>
<div class="abs" style="left:6.0px;top:479.2px;width:16.5px;height:0.8px;background:#c4c4c4;"></div>
<div class="abs" style="left:22.5px;top:491.0px;width:913.0px;height:0.8px;background:#e2e2e2;"></div>
<div class="abs" style="left:6.0px;top:491.0px;width:16.5px;height:0.8px;background:#c4c4c4;"></div>
<div class="abs" style="left:22.5px;top:502.8px;width:913.0px;height:0.8px;background:#e2e2e2;"></div>
<div class="abs" style="left:6.0px;top:502.8px;width:16.5px;height:0.8px;background:#c4c4c4;"></div>
<div class="abs" style="left:22.5px;top:514.6px;width:913.0px;height:0.8px;background:#e2e2e2;"></div>
<div class="abs" style="left:6.0px;top:514.6px;width:16.5px;height:0.8px;background:#c4c4c4;"></div>
<div class="abs" style="left:22.5px;top:526.4px;width:913.0px;height:0.8px;background:#e2e2e2;"></div>
<div class="abs" style="left:6.0px;top:526.4px;width:16.5px;height:0.8px;background:#c4c4c4;"></div>
<div class="abs" style="left:22.5px;top:538.2px;width:913.0px;height:0.8px;background:#e2e2e2;"></div>
<div class="abs" style="left:6.0px;top:538.2px;width:16.5px;height:0.8px;background:#c4c4c4;"></div>
<div class="abs" style="left:22.5px;top:550.0px;width:913.0px;height:0.8px;background:#e2e2e2;"></div>
<div class="abs" style="left:6.0px;top:550.0px;width:16.5px;height:0.8px;background:#c4c4c4;"></div>
<div class="abs" style="left:22.5px;top:561.8px;width:913.0px;height:0.8px;background:#e2e2e2;"></div>
<div class="abs" style="left:6.0px;top:561.8px;width:16.5px;height:0.8px;background:#c4c4c4;"></div>
<div class="abs" style="left:22.5px;top:573.6px;width:913.0px;height:0.8px;background:#e2e2e2;"></div>
<div class="abs" style="left:6.0px;top:573.6px;width:16.5px;height:0.8px;background:#c4c4c4;"></div>
<div class="abs" style="left:22.5px;top:585.4px;width:913.0px;height:0.8px;background:#e2e2e2;"></div>
<div class="abs" style="left:6.0px;top:585.4px;width:16.5px;height:0.8px;background:#c4c4c4;"></div>
<div class="abs" style="left:22.5px;top:597.2px;width:913.0px;height:0.8px;background:#e2e2e2;"></div>
<div class="abs" style="left:6.0px;top:597.2px;width:16.5px;height:0.8px;background:#c4c4c4;"></div>
<div class="abs" style="left:22.5px;top:609.0px;width:913.0px;height:0.8px;background:#e2e2e2;"></div>
<div class="abs" style="left:6.0px;top:609.0px;width:16.5px;height:0.8px;background:#c4c4c4;"></div>
<div class="abs" style="left:22.5px;top:620.8px;width:913.0px;height:0.8px;background:#e2e2e2;"></div>
<div class="abs" style="left:6.0px;top:620.8px;width:16.5px;height:0.8px;background:#c4c4c4;"></div>
<div class="abs" style="left:22.5px;top:632.6px;width:913.0px;height:0.8px;background:#e2e2e2;"></div>
<div class="abs" style="left:6.0px;top:632.6px;width:16.5px;height:0.8px;background:#c4c4c4;"></div>
<div class="abs" style="left:22.5px;top:644.4px;width:913.0px;height:0.8px;background:#e2e2e2;"></div>
<div class="abs" style="left:6.0px;top:644.4px;width:16.5px;height:0.8px;background:#c4c4c4;"></div>
<div class="abs" style="left:22.0px;top:296.0px;width:0.8px;height:351.0px;background:#c4c4c4;"></div>
<div class="abs" style="left:23.0px;top:329.0px;width:197.0px;height:55.0px;background:#fff;"></div>
<div class="abs" style="left:23.0px;top:308.5px;width:912.0px;height:19.6px;background:#fff;"></div>
<div class="abs" style="left:220.1px;top:308.5px;width:0.8px;height:19.6px;background:#e2e2e2;"></div>
<span class="t" style="left:14.2px;top:318.5px;font-size:8.3px;color:#444;transform:scaleX(0.932);transform-origin:0 50%;">3</span>
<span class="t" style="left:14.2px;top:338.0px;font-size:8.3px;color:#444;transform:scaleX(0.932);transform-origin:0 50%;">4</span>
<span class="t" style="left:14.2px;top:358.0px;font-size:8.3px;color:#444;transform:scaleX(0.932);transform-origin:0 50%;">5</span>
<span class="t" style="left:14.2px;top:375.0px;font-size:8.3px;color:#444;transform:scaleX(0.932);transform-origin:0 50%;">6</span>
<span class="t" style="left:14.2px;top:410.0px;font-size:8.3px;color:#444;transform:scaleX(0.932);transform-origin:0 50%;">7</span>
<span class="t" style="left:14.2px;top:445.5px;font-size:8.3px;color:#444;transform:scaleX(0.932);transform-origin:0 50%;">8</span>
<span class="t" style="left:14.2px;top:469.5px;font-size:8.3px;color:#444;transform:scaleX(0.932);transform-origin:0 50%;">9</span>
<span class="t" style="left:9.9px;top:481.2px;font-size:8.3px;color:#444;transform:scaleX(0.932);transform-origin:0 50%;">10</span>
<span class="t" style="left:9.9px;top:493.0px;font-size:8.3px;color:#444;">11</span>
<span class="t" style="left:9.9px;top:504.8px;font-size:8.3px;color:#444;transform:scaleX(0.932);transform-origin:0 50%;">12</span>
<span class="t" style="left:9.9px;top:516.6px;font-size:8.3px;color:#444;transform:scaleX(0.932);transform-origin:0 50%;">13</span>
<div class="abs" style="left:6.0px;top:526.8px;width:16.5px;height:11.8px;background:#d2d2d2;"></div>
<div class="abs" style="left:21.5px;top:526.8px;width:1.2px;height:11.8px;background:#217346;"></div>
<span class="t" style="left:9.9px;top:528.4px;font-size:8.3px;color:#217346;transform:scaleX(0.932);transform-origin:0 50%;">14</span>
<span class="t" style="left:9.9px;top:540.2px;font-size:8.3px;color:#444;transform:scaleX(0.932);transform-origin:0 50%;">15</span>
<span class="t" style="left:9.9px;top:552.0px;font-size:8.3px;color:#444;transform:scaleX(0.932);transform-origin:0 50%;">16</span>
<span class="t" style="left:9.9px;top:563.8px;font-size:8.3px;color:#444;transform:scaleX(0.932);transform-origin:0 50%;">17</span>
<span class="t" style="left:9.9px;top:575.6px;font-size:8.3px;color:#444;transform:scaleX(0.932);transform-origin:0 50%;">18</span>
<span class="t" style="left:9.9px;top:587.4px;font-size:8.3px;color:#444;transform:scaleX(0.932);transform-origin:0 50%;">19</span>
<span class="t" style="left:9.9px;top:599.2px;font-size:8.3px;color:#444;transform:scaleX(0.932);transform-origin:0 50%;">20</span>
<span class="t" style="left:9.9px;top:611.0px;font-size:8.3px;color:#444;transform:scaleX(0.932);transform-origin:0 50%;">21</span>
<span class="t" style="left:9.9px;top:622.8px;font-size:8.3px;color:#444;transform:scaleX(0.932);transform-origin:0 50%;">22</span>
<span class="t" style="left:9.9px;top:634.6px;font-size:8.3px;color:#444;transform:scaleX(0.932);transform-origin:0 50%;">23</span>
<div class="abs" style="left:220.5px;top:328.5px;width:321.0px;height:56.0px;background:#808080;"></div>
<div class="abs" style="left:541.5px;top:328.5px;width:394.0px;height:56.0px;background:#0070c0;"></div>
<div class="abs" style="left:22.5px;top:384.5px;width:198.0px;height:36.0px;background:#ffff00;"></div>
<div class="abs" style="left:22.5px;top:420.5px;width:198.0px;height:35.1px;background:#8ea9db;"></div>
<div class="abs" style="left:22.5px;top:455.6px;width:198.0px;height:24.0px;background:#f4b084;"></div>
<div class="abs" style="left:541.5px;top:384.5px;width:39.5px;height:36.0px;background:#ffff00;"></div>
<div class="abs" style="left:581.0px;top:384.5px;width:39.4px;height:36.0px;background:#ffff00;"></div>
<div class="abs" style="left:620.4px;top:384.5px;width:39.3px;height:36.0px;background:#ffff00;"></div>
<div class="abs" style="left:856.6px;top:384.5px;width:39.6px;height:36.0px;background:#ffff00;"></div>
<div class="abs" style="left:896.2px;top:384.5px;width:39.3px;height:36.0px;background:#ffff00;"></div>
<div class="abs" style="left:659.7px;top:420.5px;width:39.4px;height:35.1px;background:#8ea9db;"></div>
<div class="abs" style="left:699.1px;top:420.5px;width:39.3px;height:35.1px;background:#8ea9db;"></div>
<div class="abs" style="left:817.3px;top:420.5px;width:39.3px;height:35.1px;background:#8ea9db;"></div>
<div class="abs" style="left:738.4px;top:455.6px;width:39.6px;height:24.0px;background:#f4b084;"></div>
<div class="abs" style="left:778.0px;top:455.6px;width:39.3px;height:24.0px;background:#f4b084;"></div>
<div class="abs" style="left:220.5px;top:503.2px;width:321.0px;height:11.8px;background:#ffff00;"></div>
<div class="abs" style="left:220.5px;top:515.0px;width:321.0px;height:11.8px;background:#ffff00;"></div>
<div class="abs" style="left:220.5px;top:526.8px;width:321.0px;height:11.8px;background:#ffff00;"></div>
<div class="abs" style="left:220.5px;top:538.6px;width:321.0px;height:11.8px;background:#8ea9db;"></div>
<div class="abs" style="left:220.5px;top:550.4px;width:321.0px;height:11.8px;background:#8ea9db;"></div>
<div class="abs" style="left:220.5px;top:562.2px;width:321.0px;height:11.8px;background:#f4b084;"></div>
<div class="abs" style="left:220.5px;top:574.0px;width:321.0px;height:11.8px;background:#f4b084;"></div>
<div class="abs" style="left:220.5px;top:585.8px;width:321.0px;height:11.8px;background:#8ea9db;"></div>
<div class="abs" style="left:220.5px;top:597.6px;width:321.0px;height:11.8px;background:#ffff00;"></div>
<div class="abs" style="left:220.5px;top:609.4px;width:321.0px;height:11.8px;background:#ffff00;"></div>
<div class="abs" style="left:22.5px;top:384.1px;width:913.0px;height:0.8px;background:#333;"></div>
<div class="abs" style="left:22.5px;top:420.1px;width:913.0px;height:0.8px;background:#333;"></div>
<div class="abs" style="left:22.5px;top:455.2px;width:913.0px;height:0.8px;background:#333;"></div>
<div class="abs" style="left:22.5px;top:479.2px;width:198.0px;height:0.8px;background:#333;"></div>
<div class="abs" style="left:541.5px;top:479.2px;width:394.0px;height:0.8px;background:#333;"></div>
<div class="abs" style="left:220.5px;top:479.2px;width:321.0px;height:0.8px;background:#bdbdbd;"></div>
<div class="abs" style="left:220.5px;top:328.1px;width:715.0px;height:0.8px;background:#333;"></div>
<div class="abs" style="left:220.1px;top:328.5px;width:0.8px;height:151.1px;background:#333;"></div>
<div class="abs" style="left:22.1px;top:384.5px;width:0.8px;height:95.1px;background:#333;"></div>
<div class="abs" style="left:541.1px;top:384.5px;width:0.8px;height:95.1px;background:#333;"></div>
<div class="abs" style="left:580.6px;top:384.5px;width:0.8px;height:95.1px;background:#333;"></div>
<div class="abs" style="left:620.0px;top:384.5px;width:0.8px;height:95.1px;background:#333;"></div>
<div class="abs" style="left:659.3px;top:384.5px;width:0.8px;height:95.1px;background:#333;"></div>
<div class="abs" style="left:698.7px;top:384.5px;width:0.8px;height:95.1px;background:#333;"></div>
<div class="abs" style="left:738.0px;top:384.5px;width:0.8px;height:95.1px;background:#333;"></div>
<div class="abs" style="left:777.6px;top:384.5px;width:0.8px;height:95.1px;background:#333;"></div>
<div class="abs" style="left:816.9px;top:384.5px;width:0.8px;height:95.1px;background:#333;"></div>
<div class="abs" style="left:856.2px;top:384.5px;width:0.8px;height:95.1px;background:#333;"></div>
<div class="abs" style="left:895.8px;top:384.5px;width:0.8px;height:95.1px;background:#333;"></div>
<div class="abs" style="left:935.1px;top:384.5px;width:0.8px;height:95.1px;background:#333;"></div>
<div class="abs" style="left:541.5px;top:347.4px;width:394.0px;height:0.8px;background:#0a4f86;"></div>
<div class="abs" style="left:541.5px;top:367.1px;width:394.0px;height:0.8px;background:#0a4f86;"></div>
<div class="abs" style="left:580.6px;top:347.8px;width:0.8px;height:36.7px;background:#0a4f86;"></div>
<div class="abs" style="left:620.0px;top:347.8px;width:0.8px;height:36.7px;background:#0a4f86;"></div>
<div class="abs" style="left:659.3px;top:347.8px;width:0.8px;height:36.7px;background:#0a4f86;"></div>
<div class="abs" style="left:698.7px;top:347.8px;width:0.8px;height:36.7px;background:#0a4f86;"></div>
<div class="abs" style="left:738.0px;top:347.8px;width:0.8px;height:36.7px;background:#0a4f86;"></div>
<div class="abs" style="left:777.6px;top:347.8px;width:0.8px;height:36.7px;background:#0a4f86;"></div>
<div class="abs" style="left:816.9px;top:347.8px;width:0.8px;height:36.7px;background:#0a4f86;"></div>
<div class="abs" style="left:856.2px;top:347.8px;width:0.8px;height:36.7px;background:#0a4f86;"></div>
<div class="abs" style="left:895.8px;top:347.8px;width:0.8px;height:36.7px;background:#0a4f86;"></div>
<div class="abs" style="left:541.1px;top:328.5px;width:0.8px;height:56.0px;background:#333;"></div>
<div class="abs" style="left:935.1px;top:328.5px;width:0.8px;height:56.0px;background:#333;"></div>
<div class="abs" style="left:220.5px;top:502.9px;width:399.9px;height:0.7px;background:rgba(0,0,0,0.550);"></div>
<div class="abs" style="left:220.5px;top:514.6px;width:399.9px;height:0.7px;background:rgba(0,0,0,0.550);"></div>
<div class="abs" style="left:220.5px;top:526.4px;width:399.9px;height:0.7px;background:rgba(0,0,0,0.550);"></div>
<div class="abs" style="left:220.5px;top:538.2px;width:399.9px;height:0.7px;background:rgba(0,0,0,0.550);"></div>
<div class="abs" style="left:220.5px;top:550.0px;width:399.9px;height:0.7px;background:rgba(0,0,0,0.550);"></div>
<div class="abs" style="left:220.5px;top:561.8px;width:399.9px;height:0.7px;background:rgba(0,0,0,0.550);"></div>
<div class="abs" style="left:220.5px;top:573.6px;width:399.9px;height:0.7px;background:rgba(0,0,0,0.550);"></div>
<div class="abs" style="left:220.5px;top:585.4px;width:399.9px;height:0.7px;background:rgba(0,0,0,0.550);"></div>
<div class="abs" style="left:220.5px;top:597.2px;width:399.9px;height:0.7px;background:rgba(0,0,0,0.550);"></div>
<div class="abs" style="left:220.5px;top:609.0px;width:399.9px;height:0.7px;background:rgba(0,0,0,0.550);"></div>
<div class="abs" style="left:220.5px;top:620.8px;width:399.9px;height:0.7px;background:rgba(0,0,0,0.550);"></div>
<div class="abs" style="left:220.1px;top:503.2px;width:0.8px;height:118.0px;background:rgba(0,0,0,0.600);"></div>
<div class="abs" style="left:541.1px;top:503.2px;width:0.8px;height:118.0px;background:rgba(0,0,0,0.600);"></div>
<div class="abs" style="left:580.6px;top:503.2px;width:0.8px;height:118.0px;background:rgba(0,0,0,0.600);"></div>
<div class="abs" style="left:620.0px;top:503.2px;width:0.8px;height:118.0px;background:rgba(0,0,0,0.600);"></div>
<span class="t" style="left:469.0px;top:315.1px;font-size:7.9px;color:#111;font-weight:bold;transform:scaleX(0.935);transform-origin:0 50%;">PROFIL LULUSAN DAN CAPAIAN PEMBELAJARAN LULUSAN</span>
<span class="t" style="left:91.5px;top:353.9px;font-size:7.9px;color:#111;font-weight:bold;transform:scaleX(0.931);transform-origin:0 50%;">PROFIL ULUSAN</span>
<span class="t" style="left:338.0px;top:353.7px;font-size:7.9px;color:#111;font-weight:bold;transform:scaleX(0.938);transform-origin:0 50%;">KOMPETENSI LULUSAN</span>
<span class="t" style="left:663.6px;top:334.4px;font-size:9px;color:#fff;font-weight:bold;transform:scaleX(0.940);transform-origin:0 50%;">Capaian Pembelajaran Lulusan (CPL)</span>
<span class="t" style="left:557.2px;top:354.9px;font-size:7.9px;color:#fff;font-weight:bold;transform:scaleX(0.828);transform-origin:0 50%;">S1</span>
<span class="t" style="left:551.5px;top:373.7px;font-size:7.9px;color:#fff;font-weight:bold;transform:scaleX(0.881);transform-origin:0 50%;">CPL 1</span>
<span class="t" style="left:594.0px;top:354.9px;font-size:7.9px;color:#fff;font-weight:bold;transform:scaleX(0.913);transform-origin:0 50%;">PA1</span>
<span class="t" style="left:590.9px;top:373.7px;font-size:7.9px;color:#fff;font-weight:bold;transform:scaleX(0.881);transform-origin:0 50%;">CPL 2</span>
<span class="t" style="left:632.8px;top:354.9px;font-size:7.9px;color:#fff;font-weight:bold;transform:scaleX(0.917);transform-origin:0 50%;">KU1</span>
<span class="t" style="left:630.2px;top:373.7px;font-size:7.9px;color:#fff;font-weight:bold;transform:scaleX(0.881);transform-origin:0 50%;">CPL 3</span>
<span class="t" style="left:672.2px;top:354.9px;font-size:7.9px;color:#fff;font-weight:bold;transform:scaleX(0.917);transform-origin:0 50%;">KU2</span>
<span class="t" style="left:669.6px;top:373.7px;font-size:7.9px;color:#fff;font-weight:bold;transform:scaleX(0.881);transform-origin:0 50%;">CPL 4</span>
<span class="t" style="left:711.5px;top:354.9px;font-size:7.9px;color:#fff;font-weight:bold;transform:scaleX(0.917);transform-origin:0 50%;">KU3</span>
<span class="t" style="left:709.0px;top:373.7px;font-size:7.9px;color:#fff;font-weight:bold;transform:scaleX(0.881);transform-origin:0 50%;">CPL 5</span>
<span class="t" style="left:751.2px;top:354.9px;font-size:7.9px;color:#fff;font-weight:bold;transform:scaleX(0.886);transform-origin:0 50%;">KK1</span>
<span class="t" style="left:748.4px;top:373.7px;font-size:7.9px;color:#fff;font-weight:bold;transform:scaleX(0.881);transform-origin:0 50%;">CPL 6</span>
<span class="t" style="left:790.6px;top:354.9px;font-size:7.9px;color:#fff;font-weight:bold;transform:scaleX(0.886);transform-origin:0 50%;">KK2</span>
<span class="t" style="left:787.9px;top:373.7px;font-size:7.9px;color:#fff;font-weight:bold;transform:scaleX(0.881);transform-origin:0 50%;">CPL 7</span>
<span class="t" style="left:830.0px;top:354.9px;font-size:7.9px;color:#fff;font-weight:bold;transform:scaleX(0.886);transform-origin:0 50%;">KK3</span>
<span class="t" style="left:827.2px;top:373.7px;font-size:7.9px;color:#fff;font-weight:bold;transform:scaleX(0.881);transform-origin:0 50%;">CPL 8</span>
<span class="t" style="left:869.4px;top:354.9px;font-size:7.9px;color:#fff;font-weight:bold;transform:scaleX(0.886);transform-origin:0 50%;">KK4</span>
<span class="t" style="left:866.6px;top:373.7px;font-size:7.9px;color:#fff;font-weight:bold;transform:scaleX(0.881);transform-origin:0 50%;">CPL 9</span>
<span class="t" style="left:908.9px;top:354.9px;font-size:7.9px;color:#fff;font-weight:bold;transform:scaleX(0.886);transform-origin:0 50%;">KK5</span>
<span class="t" style="left:903.5px;top:373.7px;font-size:7.9px;color:#fff;font-weight:bold;transform:scaleX(0.931);transform-origin:0 50%;">CPL 10</span>
<span class="t" style="left:24.5px;top:394.3px;font-size:7.6px;color:#111;transform:scaleX(1.032);transform-origin:0 50%;-webkit-text-stroke:0.22px #111;">Praktisi Bisnis (</span>
<span class="t" style="left:78.1px;top:394.3px;font-size:7.6px;color:#111;font-style:italic;transform:scaleX(1.032);transform-origin:0 50%;-webkit-text-stroke:0.22px #111;">business owner </span>
<span class="t" style="left:134.8px;top:394.3px;font-size:7.6px;color:#111;transform:scaleX(1.032);transform-origin:0 50%;-webkit-text-stroke:0.22px #111;">)/ </span>
<span class="t" style="left:141.8px;top:394.3px;font-size:7.6px;color:#111;font-style:italic;transform:scaleX(1.032);transform-origin:0 50%;-webkit-text-stroke:0.22px #111;">Enterpreneur </span>
<span class="t" style="left:189.8px;top:394.3px;font-size:7.6px;color:#111;transform:scaleX(1.032);transform-origin:0 50%;-webkit-text-stroke:0.22px #111;"> bidang</span>
<span class="t" style="left:24.5px;top:406.3px;font-size:7.6px;color:#111;transform:scaleX(1.053);transform-origin:0 50%;-webkit-text-stroke:0.22px #111;">jasa dan manufaktur</span>
<span class="t" style="left:24.5px;top:429.3px;font-size:7.6px;color:#111;transform:scaleX(1.038);transform-origin:0 50%;-webkit-text-stroke:0.22px #111;">Tenaga Profesional (</span>
<span class="t" style="left:96.9px;top:429.3px;font-size:7.6px;color:#111;font-style:italic;transform:scaleX(1.038);transform-origin:0 50%;-webkit-text-stroke:0.22px #111;">Human Capital, logistics</span>
<span class="t" style="left:24.5px;top:441.2px;font-size:7.6px;color:#111;font-style:italic;transform:scaleX(1.052);transform-origin:0 50%;-webkit-text-stroke:0.22px #111;">operations officer, Finance and Administration </span>
<span class="t" style="left:188.6px;top:441.2px;font-size:7.6px;color:#111;transform:scaleX(1.052);transform-origin:0 50%;-webkit-text-stroke:0.22px #111;"> )</span>
<span class="t" style="left:24.5px;top:464.7px;font-size:7.6px;color:#111;transform:scaleX(1.042);transform-origin:0 50%;-webkit-text-stroke:0.22px #111;">Analis/ Konsultan Manajemen dan Bisnis</span>
<span class="t" style="left:222.7px;top:388.1px;font-size:7.6px;color:#111;transform:scaleX(1.059);transform-origin:0 50%;-webkit-text-stroke:0.22px #111;">Lulusan mampu menjadi enterpreneur yang berintegritas  dan komunikatif dalam</span>
<span class="t" style="left:222.7px;top:400.0px;font-size:7.6px;color:#111;transform:scaleX(1.044);transform-origin:0 50%;-webkit-text-stroke:0.22px #111;">menganalisis serta memecahkan masalah manajerial dengan pendekatan yang sistematis</span>
<span class="t" style="left:222.7px;top:411.7px;font-size:7.6px;color:#111;transform:scaleX(1.081);transform-origin:0 50%;-webkit-text-stroke:0.22px #111;">dan terstruktur.</span>
<span class="t" style="left:222.7px;top:429.3px;font-size:7.6px;color:#111;transform:scaleX(1.042);transform-origin:0 50%;-webkit-text-stroke:0.22px #111;">Lulusan berpartisipasi dalam memperluas dan mengembangkan pengetahuan</span>
<span class="t" style="left:222.7px;top:441.0px;font-size:7.6px;color:#111;transform:scaleX(1.051);transform-origin:0 50%;-webkit-text-stroke:0.22px #111;">manajemen dengan adaptasi perkembangan teknologi</span>
<span class="t" style="left:222.7px;top:458.7px;font-size:7.6px;color:#111;transform:scaleX(1.042);transform-origin:0 50%;-webkit-text-stroke:0.22px #111;">Lulusan memberikan saran di bidang bisnis dan manajemen untuk meningkatkan nilai</span>
<span class="t" style="left:222.7px;top:470.7px;font-size:7.6px;color:#111;transform:scaleX(1.043);transform-origin:0 50%;-webkit-text-stroke:0.22px #111;">bisnis dengan mempertimbangkan dampak legalitas</span>
<span class="t" style="left:222.3px;top:506.1px;font-size:7.6px;color:#111;transform:scaleX(1.045);transform-origin:0 50%;-webkit-text-stroke:0.22px #111;">Lulusan mampu menunjukkan karakter yang baik.</span>
<span class="t" style="left:222.3px;top:517.9px;font-size:7.6px;color:#111;transform:scaleX(1.063);transform-origin:0 50%;-webkit-text-stroke:0.22px #111;">Lulusan mampu memahami teori manajemen secara efektif.</span>
<span class="t" style="left:222.3px;top:529.7px;font-size:7.6px;color:#111;transform:scaleX(1.056);transform-origin:0 50%;-webkit-text-stroke:0.22px #111;">Lulusan mampu berkomunikasi secara efektif.</span>
<span class="t" style="left:222.3px;top:541.5px;font-size:7.6px;color:#111;transform:scaleX(1.055);transform-origin:0 50%;-webkit-text-stroke:0.22px #111;">Lulusan mampu menggunakan teknologi informasi secara tepat.</span>
<span class="t" style="left:222.3px;top:553.3px;font-size:7.6px;color:#111;transform:scaleX(1.040);transform-origin:0 50%;-webkit-text-stroke:0.22px #111;">Lulusan mampu bekerja dengan baik untuk pengembangan diri.</span>
<span class="t" style="left:222.3px;top:565.1px;font-size:7.6px;color:#111;transform:scaleX(1.052);transform-origin:0 50%;-webkit-text-stroke:0.22px #111;">Lulusan mampu memecahkan masalah bisnis secara kreatif dan inovatif.</span>
<span class="t" style="left:222.3px;top:576.9px;font-size:7.6px;color:#111;transform:scaleX(1.041);transform-origin:0 50%;-webkit-text-stroke:0.22px #111;">Lulusan mampu merancang rencana bisnis secara komprehensif.</span>
<span class="t" style="left:222.3px;top:588.7px;font-size:7.6px;color:#111;transform:scaleX(1.048);transform-origin:0 50%;-webkit-text-stroke:0.22px #111;">Lulusan mampu melakukan penelitian dengan baik dan beretika.</span>
<span class="t" style="left:557.5px;top:506.1px;font-size:7.6px;color:#111;transform:scaleX(0.807);transform-origin:0 50%;-webkit-text-stroke:0.22px #111;">S1</span>
<span class="t" style="left:590.9px;top:506.1px;font-size:7.6px;color:#111;transform:scaleX(0.940);transform-origin:0 50%;-webkit-text-stroke:0.22px #111;">CPL 1</span>
<span class="t" style="left:557.0px;top:517.9px;font-size:7.6px;color:#111;transform:scaleX(0.888);transform-origin:0 50%;-webkit-text-stroke:0.22px #111;">PA</span>
<span class="t" style="left:590.9px;top:517.9px;font-size:7.6px;color:#111;transform:scaleX(0.940);transform-origin:0 50%;-webkit-text-stroke:0.22px #111;">CPL 2</span>
<span class="t" style="left:554.2px;top:529.7px;font-size:7.6px;color:#111;transform:scaleX(0.947);transform-origin:0 50%;-webkit-text-stroke:0.22px #111;">KU1</span>
<span class="t" style="left:590.9px;top:529.7px;font-size:7.6px;color:#111;transform:scaleX(0.940);transform-origin:0 50%;-webkit-text-stroke:0.22px #111;">CPL 3</span>
<span class="t" style="left:554.2px;top:541.5px;font-size:7.6px;color:#111;transform:scaleX(0.947);transform-origin:0 50%;-webkit-text-stroke:0.22px #111;">KU2</span>
<span class="t" style="left:590.9px;top:541.5px;font-size:7.6px;color:#111;transform:scaleX(0.940);transform-origin:0 50%;-webkit-text-stroke:0.22px #111;">CPL 4</span>
<span class="t" style="left:554.2px;top:553.3px;font-size:7.6px;color:#111;transform:scaleX(0.947);transform-origin:0 50%;-webkit-text-stroke:0.22px #111;">KU3</span>
<span class="t" style="left:590.9px;top:553.3px;font-size:7.6px;color:#111;transform:scaleX(0.940);transform-origin:0 50%;-webkit-text-stroke:0.22px #111;">CPL 5</span>
<span class="t" style="left:554.5px;top:565.1px;font-size:7.6px;color:#111;transform:scaleX(0.940);transform-origin:0 50%;-webkit-text-stroke:0.22px #111;">KK1</span>
<span class="t" style="left:590.9px;top:565.1px;font-size:7.6px;color:#111;transform:scaleX(0.940);transform-origin:0 50%;-webkit-text-stroke:0.22px #111;">CPL 6</span>
<span class="t" style="left:554.5px;top:576.9px;font-size:7.6px;color:#111;transform:scaleX(0.940);transform-origin:0 50%;-webkit-text-stroke:0.22px #111;">KK2</span>
<span class="t" style="left:590.9px;top:576.9px;font-size:7.6px;color:#111;transform:scaleX(0.940);transform-origin:0 50%;-webkit-text-stroke:0.22px #111;">CPL 7</span>
<span class="t" style="left:554.5px;top:588.7px;font-size:7.6px;color:#111;transform:scaleX(0.940);transform-origin:0 50%;-webkit-text-stroke:0.22px #111;">KK3</span>
<span class="t" style="left:590.9px;top:588.7px;font-size:7.6px;color:#111;transform:scaleX(0.940);transform-origin:0 50%;-webkit-text-stroke:0.22px #111;">CPL 8</span>
<span class="t" style="left:554.5px;top:600.5px;font-size:7.6px;color:#111;transform:scaleX(0.940);transform-origin:0 50%;-webkit-text-stroke:0.22px #111;">KK4</span>
<span class="t" style="left:590.9px;top:600.5px;font-size:7.6px;color:#111;transform:scaleX(0.940);transform-origin:0 50%;-webkit-text-stroke:0.22px #111;">CPL 9</span>
<span class="t" style="left:554.5px;top:612.3px;font-size:7.6px;color:#c0392b;transform:scaleX(0.940);transform-origin:0 50%;-webkit-text-stroke:0.22px #c0392b;">KK5</span>
<span class="t" style="left:588.7px;top:612.3px;font-size:7.6px;color:#c0392b;transform:scaleX(0.957);transform-origin:0 50%;-webkit-text-stroke:0.22px #c0392b;">CPL 10</span>
<div class="abs" style="left:22.0px;top:526.3px;width:199.0px;height:12.799999999999955px;border:1.200px solid #217346"></div>
<div class="abs" style="left:219.3px;top:537.4px;width:2.6px;height:2.6px;background:#217346;outline:0.600px solid #fff"></div>
<svg class="abs" style="left:116.0px;top:533.0px;" width="7" height="12" viewBox="0 0 7 12"><path d="M0.500 0.500v9.500l2.200-2 1.600 3.500 1.400-0.600-1.600-3.400h3z" fill="#fff" stroke="#000" stroke-width="0.700"/></svg>
<div class="abs" style="left:938.8px;top:296.0px;width:12.2px;height:351.0px;background:#e6e6e6;"></div>
<div class="abs" style="left:939.3px;top:308.0px;width:11.7px;height:339.0px;background:#f0f0f0;"></div>
<div class="abs" style="left:938.6px;top:308.0px;width:0.7px;height:339.0px;background:#c8c8c8;"></div>
<div class="abs" style="left:940px;top:296.800px;width:9.500px;height:9.800px;background:#fff;border:1px solid #c4c4c4"></div>
<svg class="abs" style="left:941.8px;top:299.8px;" width="6" height="4" viewBox="0 0 6 4"><path d="M0.500 3.500l2.500-3 2.500 3z" fill="#555"/></svg>
<div class="abs" style="left:940px;top:335px;width:9.500px;height:300px;background:#fff;border:1px solid #c4c4c4"></div>
<div class="abs" style="left:940px;top:637px;width:9.500px;height:9.800px;background:#fff;border:1px solid #c4c4c4"></div>
<svg class="abs" style="left:941.8px;top:640.0px;" width="6" height="4" viewBox="0 0 6 4"><path d="M0.500 0.500l2.500 3 2.500-3z" fill="#555"/></svg>
<div class="abs" style="left:6.0px;top:647.0px;width:945.0px;height:14.0px;background:#e6e6e6;"></div>
<div class="abs" style="left:6.0px;top:646.6px;width:945.0px;height:0.8px;background:#c4c4c4;"></div>
<svg class="abs" style="left:19.0px;top:651.0px;" width="4" height="5" viewBox="0 0 4 5"><path d="M3.500 0.500v4l-3-2z" fill="#c4c4c4"/></svg>
<svg class="abs" style="left:33.0px;top:651.0px;" width="4" height="5" viewBox="0 0 4 5"><path d="M0.500 0.500v4l3-2z" fill="#555"/></svg>
<span class="t" style="left:65.4px;top:649.2px;font-size:8.6px;color:#555;transform:scaleX(0.933);transform-origin:0 50%;">Profil Lulusan (PL)</span>
<span class="t" style="left:145.8px;top:649.2px;font-size:8.6px;color:#555;transform:scaleX(0.849);transform-origin:0 50%;">CPL</span>
<div class="abs" style="left:166.5px;top:647.0px;width:80.5px;height:13.0px;background:#fff;"></div>
<div class="abs" style="left:166.5px;top:659.3px;width:80.5px;height:1.0px;background:#217346;"></div>
<span class="t" style="left:172.5px;top:649.2px;font-size:8.6px;color:#217346;font-weight:bold;transform:scaleX(0.952);transform-origin:0 50%;">Matriks PL &amp; CPL</span>
<span class="t" style="left:254.7px;top:649.2px;font-size:8.6px;color:#555;transform:scaleX(0.937);transform-origin:0 50%;">Asses. MK - Bahan kajian</span>
<span class="t" style="left:364.5px;top:649.2px;font-size:8.6px;color:#555;transform:scaleX(0.984);transform-origin:0 50%;">Matrik Bahan kajian - MK</span>
<div class="abs" style="left:470.0px;top:648.5px;width:87.3px;height:11.0px;background:#ff0000;"></div>
<span class="t" style="left:476.7px;top:649.2px;font-size:8.6px;color:#fff;transform:scaleX(0.980);transform-origin:0 50%;">Body of Knowledge</span>
<span class="t" style="left:566.0px;top:649.2px;font-size:8.6px;color:#555;transform:scaleX(0.962);transform-origin:0 50%;">Bahan kajian - MK - CPL</span>
<div class="abs" style="left:666.6px;top:648.5px;width:111.8px;height:11.0px;background:#0070c0;"></div>
<span class="t" style="left:674.5px;top:649.2px;font-size:8.6px;color:#fff;transform:scaleX(0.989);transform-origin:0 50%;">Matriks &amp; Peta Kurikulum</span>
<div class="abs" style="left:781.0px;top:648.5px;width:77.4px;height:11.0px;background:#0070c0;"></div>
<span class="t" style="left:790.0px;top:649.2px;font-size:8.6px;color:#fff;transform:scaleX(0.973);transform-origin:0 50%;">Matriks &amp; Peta Ku</span>
<div class="abs" style="left:57.0px;top:650.0px;width:0.8px;height:9.0px;background:#bbb;"></div>
<div class="abs" style="left:138.5px;top:650.0px;width:0.8px;height:9.0px;background:#bbb;"></div>
<div class="abs" style="left:356.0px;top:650.0px;width:0.8px;height:9.0px;background:#bbb;"></div>
<div class="abs" style="left:462.0px;top:650.0px;width:0.8px;height:9.0px;background:#bbb;"></div>
<span class="t" style="left:861.5px;top:650.4px;font-size:8px;color:#555;transform:scaleX(1.050);transform-origin:0 50%;">...</span>
<svg class="abs" style="left:875.0px;top:649.5px;" width="9" height="9" viewBox="0 0 9 9"><circle cx="4.500" cy="4.500" r="4" stroke="#777" fill="none" stroke-width="0.700"/><path d="M2.500 4.500h4M4.500 2.500v4" stroke="#777" stroke-width="0.700"/></svg>
<div class="abs" style="left:893.5px;top:650.5px;width:1.0px;height:1.0px;background:#999;"></div>
<div class="abs" style="left:893.5px;top:653.5px;width:1.0px;height:1.0px;background:#999;"></div>
<div class="abs" style="left:893.5px;top:656.5px;width:1.0px;height:1.0px;background:#999;"></div>
<div class="abs" style="left:901.500px;top:648.500px;width:39px;height:11px;background:#fff;border:1px solid #c4c4c4"></div>
<div class="abs" style="left:911.0px;top:648.5px;width:0.8px;height:11.0px;background:#c4c4c4;"></div>
<div class="abs" style="left:930.0px;top:648.5px;width:0.8px;height:11.0px;background:#c4c4c4;"></div>
<svg class="abs" style="left:904.5px;top:651.5px;" width="4" height="5" viewBox="0 0 4 5"><path d="M3.500 0.500v4l-3-2z" fill="#444"/></svg>
<svg class="abs" style="left:933.0px;top:651.5px;" width="4" height="5" viewBox="0 0 4 5"><path d="M0.500 0.500v4l3-2z" fill="#444"/></svg>
<div class="abs" style="left:6.0px;top:661.0px;width:945.0px;height:14.0px;background:#f3f3f3;"></div>
<span class="t" style="left:12.5px;top:664.1px;font-size:7px;color:#555;transform:scaleX(0.914);transform-origin:0 50%;-webkit-text-stroke:0.22px #555;">Ready</span>
<svg class="abs" style="left:43.0px;top:665.0px;" width="8" height="7" viewBox="0 0 8 7"><rect x="0.400" y="0.400" width="7" height="6" fill="none" stroke="#666" stroke-width="0.700"/><path d="M0.400 2.200h7M2.500 0.400v6" stroke="#666" stroke-width="0.600"/><circle cx="1.200" cy="1.200" r="1.200" fill="#333"/></svg>
<svg class="abs" style="left:62.0px;top:664.5px;" width="10" height="9" viewBox="0 0 10 9"><circle cx="4" cy="1.500" r="1.200" fill="#555"/><path d="M1 3.500h6M4 3.500v2.500M4 6l-1.800 2.500M4 6l1.800 2.500" stroke="#555" fill="none" stroke-width="0.800"/><path d="M6.500 5.500l2.500 2.500M9 5.500l-2.500 2.500" stroke="#555" stroke-width="0.700"/></svg>
<span class="t" style="left:73.5px;top:664.1px;font-size:7px;color:#333;font-weight:bold;transform:scaleX(0.891);transform-origin:0 50%;-webkit-text-stroke:0.22px #333;">Accessibility: Investigate</span>
<div class="abs" style="left:768.0px;top:662.0px;width:24.0px;height:12.5px;background:#d0d0d0;"></div>
<svg class="abs" style="left:775.5px;top:664.5px;" width="8" height="7" viewBox="0 0 8 7"><rect x="0.400" y="0.400" width="7.200" height="6.200" stroke="#666" fill="none" stroke-width="0.700"/><path d="M0.400 2.500h7.200M0.400 4.500h7.200M2.800 0.400v6.200M5.200 0.400v6.200" stroke="#666" fill="none" stroke-width="0.700" stroke-width="0.500"/></svg>
<svg class="abs" style="left:800.0px;top:664.5px;" width="8" height="7" viewBox="0 0 8 7"><rect x="0.400" y="0.400" width="7.200" height="6.200" stroke="#666" fill="none" stroke-width="0.700"/><rect x="2" y="1.800" width="4" height="3.400" stroke="#666" fill="none" stroke-width="0.700" stroke-width="0.500"/></svg>
<svg class="abs" style="left:825.0px;top:664.5px;" width="8" height="7" viewBox="0 0 8 7"><rect x="0.400" y="0.400" width="7.200" height="6.200" stroke="#666" fill="none" stroke-width="0.700"/><path d="M0.400 4h3.500v-3.600" stroke="#666" fill="none" stroke-width="0.700" stroke-width="0.500"/></svg>
<div class="abs" style="left:845.0px;top:668.0px;width:4.5px;height:0.8px;background:#555;"></div>
<div class="abs" style="left:853.0px;top:668.0px;width:61.0px;height:0.7px;background:#888;"></div>
<div class="abs" style="left:883.0px;top:664.5px;width:2.2px;height:7.5px;background:#444;"></div>
<div class="abs" style="left:917.0px;top:668.0px;width:4.5px;height:0.8px;background:#555;"></div>
<div class="abs" style="left:918.8px;top:666.0px;width:0.8px;height:4.5px;background:#555;"></div>
<span class="t" style="left:930.0px;top:664.3px;font-size:6.6px;color:#555;transform:scaleX(0.948);transform-origin:0 50%;-webkit-text-stroke:0.22px #555;">100%</span>
<!-- video -->
<svg class="abs" style="left:969px;top:151px" width="624" height="351" viewBox="0 0 624 351"><defs><clipPath id="vc"><rect x="0" y="0" width="624" height="351" rx="8"/></clipPath><linearGradient id="wall" x1="0" y1="0" x2="0" y2="1"><stop offset="0" stop-color="#bababc"/><stop offset="0.300" stop-color="#c5c5c7"/><stop offset="0.600" stop-color="#cbcbcd"/><stop offset="1" stop-color="#c7c7c9"/></linearGradient><radialGradient id="skin" cx="0.500" cy="0.350" r="0.700"><stop offset="0" stop-color="#cfab96"/><stop offset="0.500" stop-color="#b8896f"/><stop offset="1" stop-color="#875943"/></radialGradient><linearGradient id="hair" x1="0" y1="0" x2="1" y2="0"><stop offset="0" stop-color="#8e8c90"/><stop offset="0.250" stop-color="#b2b0b3"/><stop offset="0.550" stop-color="#c9c7c9"/><stop offset="0.800" stop-color="#aeacaf"/><stop offset="1" stop-color="#8c8a8e"/></linearGradient><linearGradient id="shirt" x1="0" y1="0" x2="0" y2="1"><stop offset="0" stop-color="#f8f8fb"/><stop offset="1" stop-color="#f0f1f7"/></linearGradient><linearGradient id="vh" x1="0" y1="0" x2="1" y2="0"><stop offset="0" stop-color="#000" stop-opacity="0.140"/><stop offset="0.300" stop-color="#000" stop-opacity="0"/><stop offset="0.750" stop-color="#000" stop-opacity="0"/><stop offset="1" stop-color="#000" stop-opacity="0.100"/></linearGradient><radialGradient id="vbl" cx="0" cy="1" r="0.500"><stop offset="0" stop-color="#000" stop-opacity="0.160"/><stop offset="1" stop-color="#000" stop-opacity="0"/></radialGradient><radialGradient id="vbr" cx="1" cy="1" r="0.450"><stop offset="0" stop-color="#000" stop-opacity="0.130"/><stop offset="1" stop-color="#000" stop-opacity="0"/></radialGradient><filter id="b1" x="-20%" y="-20%" width="140%" height="140%"><feGaussianBlur stdDeviation="1.200"/></filter><filter id="b2" x="-20%" y="-20%" width="140%" height="140%"><feGaussianBlur stdDeviation="3"/></filter><filter id="b05" x="-20%" y="-20%" width="140%" height="140%"><feGaussianBlur stdDeviation="0.600"/></filter></defs><g clip-path="url(#vc)"><rect width="624" height="351" fill="url(#wall)"/><rect width="624" height="351" fill="url(#vh)"/><rect width="624" height="351" fill="url(#vbl)"/><rect width="624" height="351" fill="url(#vbr)"/><rect x="0" y="52" width="280" height="2" fill="#a9a9ab" opacity="0.250" filter="url(#b1)"/><g transform="translate(266,9)" filter="url(#b05)"><path d="M33 21q-10-6-20-1q-6 4-13 4q2 5 9 7q10 2 22-1z" fill="#c9c244" stroke="#8a8430" stroke-width="0.600"/><path d="M47 21q10-6 20-1q6 4 9 4q-1 6-8 7q-8 2-21-1z" fill="#c9c244" stroke="#8a8430" stroke-width="0.600"/><path d="M33 31q-1-10 2-16q-2-5-1-9q2-4 6-4q5 0 6 5q0 3-2 6q4 8 3 18z" fill="#c4b840" stroke="#8a8030" stroke-width="0.500"/><path d="M36 4q2-3 6-2q4 1 5 4q2 3 1 6q-3-1-4-3q-1-3-4-3q-3 0-4-2z" fill="#c8486a"/><path d="M20 32q20-4 40 0l-1 8q-19-4-38 0z" fill="#d56a84"/><path d="M5 33l16-1 1 9-12 5q-4-2-6-5l4-3z" fill="#cf4866"/><path d="M75 33l-16-1-1 9 12 5q4-2 6-5l-4-3z" fill="#cf4866"/><path d="M22 36q18-3 36 0" stroke="#e89aaa" stroke-width="1.200" fill="none"/><rect x="18.500" y="37.500" width="7.500" height="7" rx="1.500" fill="#3fae4a"/></g><g font-family="'Liberation Sans',sans-serif" font-weight="bold" filter="url(#b05)" transform="rotate(0.5 31 207)"><text x="158" y="152.5" font-size="63" fill="#931d35" stroke="#931d35" stroke-width="1.600" textLength="34" lengthAdjust="spacingAndGlyphs">L</text><text x="219" y="152.5" font-size="63" fill="#931d35" stroke="#931d35" stroke-width="1.600" textLength="34" lengthAdjust="spacingAndGlyphs">P</text><text x="276" y="152.5" font-size="63" fill="#931d35" stroke="#931d35" stroke-width="1.600" textLength="46" lengthAdjust="spacingAndGlyphs">M</text><text x="351" y="152.5" font-size="63" fill="#931d35" stroke="#931d35" stroke-width="1.600" textLength="34" lengthAdjust="spacingAndGlyphs">P</text><text x="412" y="152.5" font-size="63" fill="#931d35" stroke="#931d35" stroke-width="1.600" textLength="34" lengthAdjust="spacingAndGlyphs">P</text><text x="-24" y="207.8" font-size="43.500" fill="#161214" stroke="#161214" stroke-width="1.300" textLength="21" lengthAdjust="spacingAndGlyphs">P</text><text x="0.7000000000000455" y="207.8" font-size="43.500" fill="#161214" stroke="#161214" stroke-width="1.300" textLength="253" lengthAdjust="spacingAndGlyphs">ENJAMINAN MUTU</text><text x="262" y="207.8" font-size="43.500" fill="#161214" stroke="#161214" stroke-width="1.300" textLength="108" lengthAdjust="spacingAndGlyphs">DAN PE</text><text x="382" y="207.8" font-size="43.500" fill="#161214" stroke="#161214" stroke-width="1.300" textLength="242.5" lengthAdjust="spacingAndGlyphs">NGEMBANGAN PE</text><text x="627" y="207.8" font-size="43.500" fill="#161214" stroke="#161214" stroke-width="1.300" textLength="150" lengthAdjust="spacingAndGlyphs">NDIDIKAN</text><text x="106.40000000000009" y="265.6" font-size="45.500" fill="#931d35" stroke="#931d35" stroke-width="1.200" textLength="411" lengthAdjust="spacingAndGlyphs">UNIVERSITAS HASANUDDIN</text></g><g filter="url(#b05)"><path d="M117.0 352.0 129.0 325.0 Q141.0 301.0 166.0 291.0 L247.0 266.0 281.0 254.0 376.0 254.0 409.0 266.0 501.0 291.0 Q523.0 301.0 533.0 325.0 L541.0 352.0 Z" fill="url(#shirt)"/><path d="M166.0 319.0 Q191.0 299.0 231.0 289.0 L231.0 352.0 151.0 352.0 Z" fill="#e6e8f2" opacity="0.450" filter="url(#b2)"/><path d="M431.0 289.0 Q481.0 304.0 511.0 329.0 L521.0 352.0 431.0 352.0 Z" fill="#e6e8f2" opacity="0.450" filter="url(#b2)"/><path d="M271.0 244.0 277.0 274.0 329.5 340.0 373.0 270.0 381.0 244.0 Z" fill="#b08468"/><path d="M271.0 257.0 Q323.0 285.0 379.0 253.0 L376.0 277.0 Q326.0 301.0 279.0 281.0 Z" fill="#8a5e4a" opacity="0.750" filter="url(#b1)"/><path d="M246.0 335.0 275.5 307.0 329.5 344.0 323.0 352.0 253.0 352.0 Z" fill="#e0e2f2"/><path d="M371.5 298.0 400.0 325.0 361.0 352.0 323.0 352.0 329.5 340.0 Z" fill="#dfe1f2"/><path d="M269.0 253.0 243.0 269.0 246.0 335.0 275.5 307.0 295.0 301.0 277.0 274.0 Z" fill="#f6f6fa"/><path d="M383.0 251.0 413.0 269.0 400.0 325.0 371.5 298.0 355.0 299.5 373.0 270.0 Z" fill="#f4f4f9"/><path d="M295.0 301.0 329.5 340.0 324.0 352.0 281.0 352.0 275.5 307.0 Z" fill="#f3f3f8"/><path d="M329.5 340.0 324.0 352.0" stroke="#c6cae2" stroke-width="2.200" fill="none"/><path d="M355.0 299.5 329.5 340.0" stroke="#d0d3e6" stroke-width="1.500" fill="none"/></g><g filter="url(#b1)"><path d="M243.0 174.0 Q227.0 124.0 241.0 92.0 Q263.0 47.0 316.0 47.0 Q368.0 48.0 387.0 91.0 Q402.0 131.0 388.0 163.0 L378.0 181.0 256.0 185.0 Z" fill="url(#hair)"/><ellipse cx="251" cy="184" rx="6" ry="15" fill="#a5745c"/><ellipse cx="386" cy="179" rx="5" ry="14" fill="#a5745c"/><path d="M253.0 149.0 Q253.0 99.0 289.0 87.0 Q321.0 80.0 353.0 87.0 Q383.0 99.0 384.0 149.0 Q385.0 199.0 378.0 239.0 Q366.0 271.0 323.0 271.0 Q281.0 271.0 267.0 241.0 Q253.0 199.0 253.0 149.0 Z" fill="url(#skin)"/><ellipse cx="316" cy="111" rx="45" ry="20" fill="#d9bcaa" opacity="0.850" filter="url(#b2)"/><ellipse cx="289" cy="194" rx="14" ry="10" fill="#c89c86" opacity="0.700" filter="url(#b2)"/><ellipse cx="353" cy="192" rx="14" ry="10" fill="#c89c86" opacity="0.700" filter="url(#b2)"/><ellipse cx="265" cy="219" rx="10" ry="38" fill="#84543e" opacity="0.550" filter="url(#b2)"/><ellipse cx="377" cy="214" rx="9" ry="38" fill="#84543e" opacity="0.550" filter="url(#b2)"/><ellipse cx="323" cy="262" rx="38" ry="7" fill="#8a5a46" opacity="0.600" filter="url(#b2)"/><path d="M264.0 137.0 Q279.0 129.0 299.0 135.0" stroke="#5e4438" stroke-width="4" fill="none"/><path d="M331.0 133.0 Q351.0 127.0 368.0 136.0" stroke="#5e4438" stroke-width="4" fill="none"/><ellipse cx="284" cy="149" rx="14" ry="4" fill="#a87a64" opacity="0.800"/><ellipse cx="347" cy="146" rx="15" ry="4" fill="#a87a64" opacity="0.800"/><ellipse cx="284" cy="157" rx="11" ry="3" fill="#e0d4cc"/><ellipse cx="347" cy="155" rx="12" ry="3" fill="#e0d4cc"/><ellipse cx="285" cy="157" rx="5" ry="3" fill="#2e1c18"/><ellipse cx="346" cy="155" rx="5" ry="3" fill="#2e1c18"/><path d="M271.0 156.0 Q284.0 150.0 297.0 157.0" stroke="#4a2e26" stroke-width="2.500" fill="none"/><path d="M332.0 154.0 Q347.0 148.0 362.0 154.0" stroke="#4a2e26" stroke-width="2.500" fill="none"/><ellipse cx="320" cy="185" rx="15" ry="10" fill="#c8a088" opacity="0.900"/><path d="M302.0 191.0 Q320.0 202.0 338.0 190.0" stroke="#7a4a3a" stroke-width="3" fill="none" opacity="0.800"/><path d="M293.0 194.0 Q285.0 211.0 289.0 227.0" stroke="#8e5e48" stroke-width="2.500" fill="none" opacity="0.700"/><path d="M347.0 192.0 Q357.0 209.0 355.0 225.0" stroke="#8e5e48" stroke-width="2.500" fill="none" opacity="0.700"/><path d="M291.0 221.0 Q321.0 211.0 353.0 216.0 Q343.0 240.0 319.0 241.0 Q299.0 239.0 291.0 221.0 Z" fill="#7a4038"/><path d="M297.0 223.0 Q323.0 217.0 348.0 219.0 Q327.0 231.0 297.0 223.0 Z" fill="#e4d8ce"/><path d="M301.0 234.0 Q321.0 243.0 343.0 232.0 Q323.0 250.0 301.0 234.0 Z" fill="#a8685a"/><path d="M251.0 154.0 Q249.0 97.0 289.0 82.0 Q321.0 74.0 355.0 83.0 Q387.0 97.0 386.0 149.0 Q391.0 89.0 353.0 65.0 Q316.0 55.0 279.0 69.0 Q239.0 94.0 251.0 154.0 Z" fill="#a9a7aa"/><path d="M253.0 81.0 Q276.0 49.0 316.0 48.0 Q359.0 49.0 379.0 81.0 Q351.0 61.0 316.0 60.0 Q281.0 61.0 253.0 81.0 Z" fill="#d3d1d4" opacity="0.900"/><path d="M256.0 89.0 Q281.0 57.0 321.0 55.0" stroke="#cfcdd0" stroke-width="3" fill="none" opacity="0.800"/><path d="M331.0 55.0 Q366.0 61.0 381.0 94.0" stroke="#a3a1a4" stroke-width="3" fill="none" opacity="0.800"/></g></g></svg>
<div class="abs" style="left:971.500px;top:481px;width:89.500px;height:19px;border-radius:4px;background:rgba(58,58,58,0.820)"></div>
<span class="t" style="left:975.5px;top:484.3px;font-size:13.2px;color:#fff;">Musrizal Muin</span>
<div class="abs" style="left:955.0px;top:438.0px;width:1.2px;height:26.0px;background:#bbb;"></div>
<div class="abs" style="left:958.0px;top:438.0px;width:1.2px;height:26.0px;background:#bbb;"></div>
<div class="abs" style="left:1591.0px;top:463.0px;width:1.0px;height:22.0px;background:#888;"></div>
<!-- thumbs -->
<svg class="abs" style="left:1041px;top:616px" width="480" height="180" viewBox="0 0 480 180"><defs><filter id="tb" x="-10%" y="-10%" width="120%" height="120%"><feGaussianBlur stdDeviation="0.700"/></filter><filter id="tb2" x="-20%" y="-20%" width="140%" height="140%"><feGaussianBlur stdDeviation="2"/></filter><clipPath id="tc"><rect width="480" height="180" rx="8"/></clipPath><pattern id="batik" width="6" height="6" patternUnits="userSpaceOnUse"><rect width="6" height="6" fill="#34449a"/><circle cx="1.500" cy="1.500" r="1.200" fill="#b8c0ec"/><circle cx="4.500" cy="4.500" r="1" fill="#1c2660"/><path d="M3 0l3 3" stroke="#8a96d8" stroke-width="0.700"/></pattern><pattern id="hij" width="9" height="9" patternUnits="userSpaceOnUse"><rect width="9" height="9" fill="#5a5458"/><circle cx="2.500" cy="2.500" r="2.200" fill="#2a2628"/><circle cx="6.500" cy="6.500" r="2" fill="#a89ca0"/><circle cx="7" cy="2" r="1.200" fill="#8a6a72"/></pattern></defs><g clip-path="url(#tc)"><g transform="translate(0,0)" filter="url(#tb)"><svg width="160" height="90" viewBox="0 0 160 90" overflow="hidden"><rect width="160" height="90" fill="#fdfdfd"/><polygon points="37.0,28.0 29.5,41.0 14.5,41.0 7.0,28.0 14.5,15.0 29.5,15.0" fill="#f4e6e6" opacity="0.4"/><polygon points="60.0,40.0 53.0,52.1 39.0,52.1 32.0,40.0 39.0,27.9 53.0,27.9" fill="#e6eef4" opacity="0.4"/><polygon points="20.0,52.0 14.0,62.4 2.0,62.4 -4.0,52.0 2.0,41.6 14.0,41.6" fill="#f6f0dc" opacity="0.4"/><polygon points="72.0,18.0 66.0,28.4 54.0,28.4 48.0,18.0 54.0,7.6 66.0,7.6" fill="#f3f3f3" opacity="0.6"/><polygon points="43.0,62.0 36.5,73.3 23.5,73.3 17.0,62.0 23.5,50.7 36.5,50.7" fill="#fbe3e6" opacity="0.4"/><polygon points="157.5,47.0 149.2,61.3 132.8,61.3 124.5,47.0 132.8,32.7 149.2,32.7" fill="#c9cbd0" opacity="0.95"/><polygon points="134.0,58.5 126.5,71.5 111.5,71.5 104.0,58.5 111.5,45.5 126.5,45.5" fill="#f7eeb0" opacity="0.9"/><polygon points="117.0,52.0 110.5,63.3 97.5,63.3 91.0,52.0 97.5,40.7 110.5,40.7" fill="#d4e8f0" opacity="0.85"/><polygon points="158.0,72.0 150.0,85.9 134.0,85.9 126.0,72.0 134.0,58.1 150.0,58.1" fill="#fadadd" opacity="0.9"/><polygon points="132.0,82.0 125.0,94.1 111.0,94.1 104.0,82.0 111.0,69.9 125.0,69.9" fill="#fbe6e8" opacity="0.7"/><polygon points="166.0,60.0 161.5,67.8 152.5,67.8 148.0,60.0 152.5,52.2 161.5,52.2" fill="#d6ecf2" opacity="0.8"/><circle cx="143" cy="58" r="0.800" fill="#fff"/><circle cx="143" cy="61" r="0.800" fill="#fff"/><circle cx="146" cy="55" r="0.800" fill="#fff"/><circle cx="146" cy="58" r="0.800" fill="#fff"/><circle cx="146" cy="61" r="0.800" fill="#fff"/><circle cx="149" cy="52" r="0.800" fill="#fff"/><circle cx="149" cy="55" r="0.800" fill="#fff"/><circle cx="149" cy="58" r="0.800" fill="#fff"/><circle cx="149" cy="61" r="0.800" fill="#fff"/><circle cx="152" cy="52" r="0.800" fill="#fff"/><circle cx="152" cy="55" r="0.800" fill="#fff"/><circle cx="152" cy="58" r="0.800" fill="#fff"/><circle cx="152" cy="61" r="0.800" fill="#fff"/><path d="M3 8l5-4.500h2.500l-5 4.500zM3 11l5-4.500h2.500l-5 4.500z" fill="#f2c230"/><path d="M5 13.500l3-2.500 2.500 2.500z" fill="#2a3550"/><text x="12.500" y="5.800" font-size="2.900" font-weight="bold" fill="#1c1c28" textLength="82" lengthAdjust="spacingAndGlyphs" font-family="'Liberation Sans',sans-serif">PROGRAM BANTUAN PENGEMBANGAN PROGRAM</text><text x="12.500" y="9.900" font-size="2.900" font-weight="bold" fill="#1c1c28" textLength="85.500" lengthAdjust="spacingAndGlyphs" font-family="'Liberation Sans',sans-serif">STUDI MEMENUHI STANDAR MUTU INTERNASIONAL</text><text x="12.500" y="13.900" font-size="2.900" font-weight="bold" fill="#1c1c28" textLength="21.500" lengthAdjust="spacingAndGlyphs" font-family="'Liberation Sans',sans-serif">TAHUN 2024</text><text x="7.800" y="18.500" font-size="3" font-style="italic" fill="#777" textLength="90.500" lengthAdjust="spacingAndGlyphs" font-family="'Liberation Sans',sans-serif">Workshop Pengelolaan Perguruan Tinggi dan Program Studi</text><text x="7.800" y="22.700" font-size="3" font-style="italic" fill="#777" textLength="37" lengthAdjust="spacingAndGlyphs" font-family="'Liberation Sans',sans-serif">Berstandar Internasional</text><text x="24" y="87" font-size="2.400" font-weight="bold" fill="#666" textLength="36" lengthAdjust="spacingAndGlyphs" font-family="'Liberation Sans',sans-serif">LPMPP UNHAS, 11 JULI 2024</text><g transform="translate(109,3)"><path d="M6 0.500q1.500 0 1.500 1.500l3.500-0.500q-1 2.500-3 3q2 2 1.500 5q-1 3.500-3.500 3.500t-3.500-3.500q-0.500-3 1.500-5q-2-0.500-3-3l3.500 0.500q0-1.500 1.500-1.500z" fill="#2e6a34"/><circle cx="6" cy="8.500" r="2.300" fill="#e8e2c8"/><path d="M4 2.500h4l-0.500-2h-3z" fill="#b03030"/><path d="M1 2q5-1.500 10 0" stroke="#d8b830" stroke-width="1" fill="none"/></g><circle cx="128.700" cy="9.600" r="7.300" fill="#1a76c2"/><circle cx="128.700" cy="9.600" r="5.400" fill="#fff" opacity="0.900"/><path d="M124.500 9q4.200-4.500 8.400 0q-1 4-4.200 5q-3.200-1-4.200-5z" fill="#1a76c2"/><circle cx="128.700" cy="7.500" r="1.400" fill="#fff"/><text x="138.500" y="7.300" font-size="4.600" font-weight="bold" fill="#2a86c8" textLength="18" lengthAdjust="spacingAndGlyphs" font-family="'Liberation Sans',sans-serif">Kampus</text><text x="138.500" y="11.600" font-size="4.600" font-weight="bold" fill="#2a86c8" textLength="18.500" lengthAdjust="spacingAndGlyphs" font-family="'Liberation Sans',sans-serif">Merdeka</text><rect x="138.500" y="12.800" width="18" height="1" fill="#e8b830"/></svg></g><g transform="translate(160,0)" filter="url(#tb)"><svg width="160" height="90" viewBox="0 0 160 90" overflow="hidden"><rect width="160" height="90" fill="#fdfdfd"/><polygon points="37.0,28.0 29.5,41.0 14.5,41.0 7.0,28.0 14.5,15.0 29.5,15.0" fill="#f4e6e6" opacity="0.4"/><polygon points="60.0,40.0 53.0,52.1 39.0,52.1 32.0,40.0 39.0,27.9 53.0,27.9" fill="#e6eef4" opacity="0.4"/><polygon points="20.0,52.0 14.0,62.4 2.0,62.4 -4.0,52.0 2.0,41.6 14.0,41.6" fill="#f6f0dc" opacity="0.4"/><polygon points="72.0,18.0 66.0,28.4 54.0,28.4 48.0,18.0 54.0,7.6 66.0,7.6" fill="#f3f3f3" opacity="0.6"/><polygon points="43.0,62.0 36.5,73.3 23.5,73.3 17.0,62.0 23.5,50.7 36.5,50.7" fill="#fbe3e6" opacity="0.4"/><polygon points="157.5,47.0 149.2,61.3 132.8,61.3 124.5,47.0 132.8,32.7 149.2,32.7" fill="#c9cbd0" opacity="0.95"/><polygon points="134.0,58.5 126.5,71.5 111.5,71.5 104.0,58.5 111.5,45.5 126.5,45.5" fill="#f7eeb0" opacity="0.9"/><polygon points="117.0,52.0 110.5,63.3 97.5,63.3 91.0,52.0 97.5,40.7 110.5,40.7" fill="#d4e8f0" opacity="0.85"/><polygon points="158.0,72.0 150.0,85.9 134.0,85.9 126.0,72.0 134.0,58.1 150.0,58.1" fill="#fadadd" opacity="0.9"/><polygon points="132.0,82.0 125.0,94.1 111.0,94.1 104.0,82.0 111.0,69.9 125.0,69.9" fill="#fbe6e8" opacity="0.7"/><polygon points="166.0,60.0 161.5,67.8 152.5,67.8 148.0,60.0 152.5,52.2 161.5,52.2" fill="#d6ecf2" opacity="0.8"/><circle cx="143" cy="58" r="0.800" fill="#fff"/><circle cx="143" cy="61" r="0.800" fill="#fff"/><circle cx="146" cy="55" r="0.800" fill="#fff"/><circle cx="146" cy="58" r="0.800" fill="#fff"/><circle cx="146" cy="61" r="0.800" fill="#fff"/><circle cx="149" cy="52" r="0.800" fill="#fff"/><circle cx="149" cy="55" r="0.800" fill="#fff"/><circle cx="149" cy="58" r="0.800" fill="#fff"/><circle cx="149" cy="61" r="0.800" fill="#fff"/><circle cx="152" cy="52" r="0.800" fill="#fff"/><circle cx="152" cy="55" r="0.800" fill="#fff"/><circle cx="152" cy="58" r="0.800" fill="#fff"/><circle cx="152" cy="61" r="0.800" fill="#fff"/><path d="M3 8l5-4.500h2.500l-5 4.500zM3 11l5-4.500h2.500l-5 4.500z" fill="#f2c230"/><path d="M5 13.500l3-2.500 2.500 2.500z" fill="#2a3550"/><text x="12.500" y="5.800" font-size="2.900" font-weight="bold" fill="#1c1c28" textLength="82" lengthAdjust="spacingAndGlyphs" font-family="'Liberation Sans',sans-serif">PROGRAM BANTUAN PENGEMBANGAN PROGRAM</text><text x="12.500" y="9.900" font-size="2.900" font-weight="bold" fill="#1c1c28" textLength="85.500" lengthAdjust="spacingAndGlyphs" font-family="'Liberation Sans',sans-serif">MEMENUHI STANDAR MUTU INTERNASIONAL</text><text x="12.500" y="13.900" font-size="2.900" font-weight="bold" fill="#1c1c28" textLength="21.500" lengthAdjust="spacingAndGlyphs" font-family="'Liberation Sans',sans-serif">TAHUN 2024</text><text x="7.800" y="18.500" font-size="3" font-style="italic" fill="#777" textLength="75" lengthAdjust="spacingAndGlyphs" font-family="'Liberation Sans',sans-serif">Workshop Pendampingan Kurikulum</text><text x="7.800" y="22.300" font-size="3" font-style="italic" fill="#777" textLength="70" lengthAdjust="spacingAndGlyphs" font-family="'Liberation Sans',sans-serif">Berbasis Outcome Based Education</text><text x="7.800" y="26.300" font-size="2.800" fill="#777" textLength="42" lengthAdjust="spacingAndGlyphs" font-family="'Liberation Sans',sans-serif">LPMPP Unhas, 17 Juli 2024</text><g transform="translate(109,3)"><path d="M6 0.500q1.500 0 1.500 1.500l3.500-0.500q-1 2.500-3 3q2 2 1.500 5q-1 3.500-3.500 3.500t-3.500-3.500q-0.500-3 1.500-5q-2-0.500-3-3l3.500 0.500q0-1.500 1.500-1.500z" fill="#2e6a34"/><circle cx="6" cy="8.500" r="2.300" fill="#e8e2c8"/><path d="M4 2.500h4l-0.500-2h-3z" fill="#b03030"/><path d="M1 2q5-1.500 10 0" stroke="#d8b830" stroke-width="1" fill="none"/></g><circle cx="128.700" cy="9.600" r="7.300" fill="#1a76c2"/><circle cx="128.700" cy="9.600" r="5.400" fill="#fff" opacity="0.900"/><path d="M124.500 9q4.200-4.500 8.400 0q-1 4-4.200 5q-3.200-1-4.200-5z" fill="#1a76c2"/><circle cx="128.700" cy="7.500" r="1.400" fill="#fff"/><text x="138.500" y="7.300" font-size="4.600" font-weight="bold" fill="#2a86c8" textLength="18" lengthAdjust="spacingAndGlyphs" font-family="'Liberation Sans',sans-serif">Kampus</text><text x="138.500" y="11.600" font-size="4.600" font-weight="bold" fill="#2a86c8" textLength="18.500" lengthAdjust="spacingAndGlyphs" font-family="'Liberation Sans',sans-serif">Merdeka</text><rect x="138.500" y="12.800" width="18" height="1" fill="#e8b830"/></svg></g><g transform="translate(320,0)" filter="url(#tb)"><svg width="160" height="90" viewBox="0 0 160 90" overflow="hidden"><rect width="160" height="90" fill="#fdfdfd"/><polygon points="37.0,28.0 29.5,41.0 14.5,41.0 7.0,28.0 14.5,15.0 29.5,15.0" fill="#f4e6e6" opacity="0.4"/><polygon points="60.0,40.0 53.0,52.1 39.0,52.1 32.0,40.0 39.0,27.9 53.0,27.9" fill="#e6eef4" opacity="0.4"/><polygon points="20.0,52.0 14.0,62.4 2.0,62.4 -4.0,52.0 2.0,41.6 14.0,41.6" fill="#f6f0dc" opacity="0.4"/><polygon points="72.0,18.0 66.0,28.4 54.0,28.4 48.0,18.0 54.0,7.6 66.0,7.6" fill="#f3f3f3" opacity="0.6"/><polygon points="43.0,62.0 36.5,73.3 23.5,73.3 17.0,62.0 23.5,50.7 36.5,50.7" fill="#fbe3e6" opacity="0.4"/><polygon points="157.5,47.0 149.2,61.3 132.8,61.3 124.5,47.0 132.8,32.7 149.2,32.7" fill="#c9cbd0" opacity="0.95"/><polygon points="134.0,58.5 126.5,71.5 111.5,71.5 104.0,58.5 111.5,45.5 126.5,45.5" fill="#f7eeb0" opacity="0.9"/><polygon points="117.0,52.0 110.5,63.3 97.5,63.3 91.0,52.0 97.5,40.7 110.5,40.7" fill="#d4e8f0" opacity="0.85"/><polygon points="158.0,72.0 150.0,85.9 134.0,85.9 126.0,72.0 134.0,58.1 150.0,58.1" fill="#fadadd" opacity="0.9"/><polygon points="132.0,82.0 125.0,94.1 111.0,94.1 104.0,82.0 111.0,69.9 125.0,69.9" fill="#fbe6e8" opacity="0.7"/><polygon points="166.0,60.0 161.5,67.8 152.5,67.8 148.0,60.0 152.5,52.2 161.5,52.2" fill="#d6ecf2" opacity="0.8"/><circle cx="143" cy="58" r="0.800" fill="#fff"/><circle cx="143" cy="61" r="0.800" fill="#fff"/><circle cx="146" cy="55" r="0.800" fill="#fff"/><circle cx="146" cy="58" r="0.800" fill="#fff"/><circle cx="146" cy="61" r="0.800" fill="#fff"/><circle cx="149" cy="52" r="0.800" fill="#fff"/><circle cx="149" cy="55" r="0.800" fill="#fff"/><circle cx="149" cy="58" r="0.800" fill="#fff"/><circle cx="149" cy="61" r="0.800" fill="#fff"/><circle cx="152" cy="52" r="0.800" fill="#fff"/><circle cx="152" cy="55" r="0.800" fill="#fff"/><circle cx="152" cy="58" r="0.800" fill="#fff"/><circle cx="152" cy="61" r="0.800" fill="#fff"/><path d="M3 8l5-4.500h2.500l-5 4.500zM3 11l5-4.500h2.500l-5 4.500z" fill="#f2c230"/><path d="M5 13.500l3-2.500 2.500 2.500z" fill="#2a3550"/><text x="12.500" y="5.800" font-size="2.900" font-weight="bold" fill="#1c1c28" textLength="82" lengthAdjust="spacingAndGlyphs" font-family="'Liberation Sans',sans-serif">PROGRAM BANTUAN PENGEMBANGAN PROGRAM</text><text x="12.500" y="9.900" font-size="2.900" font-weight="bold" fill="#1c1c28" textLength="85.500" lengthAdjust="spacingAndGlyphs" font-family="'Liberation Sans',sans-serif">MEMENUHI STANDAR MUTU INTERNASIONAL</text><text x="12.500" y="13.900" font-size="2.900" font-weight="bold" fill="#1c1c28" textLength="21.500" lengthAdjust="spacingAndGlyphs" font-family="'Liberation Sans',sans-serif">TAHUN 2024</text><text x="7.800" y="18.500" font-size="3" font-style="italic" fill="#777" textLength="75" lengthAdjust="spacingAndGlyphs" font-family="'Liberation Sans',sans-serif">Workshop Pendampingan Kurikulum</text><text x="7.800" y="22.300" font-size="3" font-style="italic" fill="#777" textLength="70" lengthAdjust="spacingAndGlyphs" font-family="'Liberation Sans',sans-serif">Berbasis Outcome Based Education</text><text x="7.800" y="26.300" font-size="2.800" fill="#777" textLength="42" lengthAdjust="spacingAndGlyphs" font-family="'Liberation Sans',sans-serif">LPMPP Unhas, 17 Juli 2024</text><g transform="translate(109,3)"><path d="M6 0.500q1.500 0 1.500 1.500l3.500-0.500q-1 2.500-3 3q2 2 1.500 5q-1 3.500-3.500 3.500t-3.500-3.500q-0.500-3 1.500-5q-2-0.500-3-3l3.500 0.500q0-1.500 1.500-1.500z" fill="#2e6a34"/><circle cx="6" cy="8.500" r="2.300" fill="#e8e2c8"/><path d="M4 2.500h4l-0.500-2h-3z" fill="#b03030"/><path d="M1 2q5-1.500 10 0" stroke="#d8b830" stroke-width="1" fill="none"/></g><circle cx="128.700" cy="9.600" r="7.300" fill="#1a76c2"/><circle cx="128.700" cy="9.600" r="5.400" fill="#fff" opacity="0.900"/><path d="M124.500 9q4.200-4.500 8.400 0q-1 4-4.200 5q-3.200-1-4.200-5z" fill="#1a76c2"/><circle cx="128.700" cy="7.500" r="1.400" fill="#fff"/><text x="138.500" y="7.300" font-size="4.600" font-weight="bold" fill="#2a86c8" textLength="18" lengthAdjust="spacingAndGlyphs" font-family="'Liberation Sans',sans-serif">Kampus</text><text x="138.500" y="11.600" font-size="4.600" font-weight="bold" fill="#2a86c8" textLength="18.500" lengthAdjust="spacingAndGlyphs" font-family="'Liberation Sans',sans-serif">Merdeka</text><rect x="138.500" y="12.800" width="18" height="1" fill="#e8b830"/></svg></g><g transform="translate(0,90)" filter="url(#tb)"><svg width="160" height="90" viewBox="0 0 160 90" overflow="hidden"><rect width="160" height="90" fill="#fdfdfd"/><polygon points="37.0,28.0 29.5,41.0 14.5,41.0 7.0,28.0 14.5,15.0 29.5,15.0" fill="#f4e6e6" opacity="0.4"/><polygon points="60.0,40.0 53.0,52.1 39.0,52.1 32.0,40.0 39.0,27.9 53.0,27.9" fill="#e6eef4" opacity="0.4"/><polygon points="20.0,52.0 14.0,62.4 2.0,62.4 -4.0,52.0 2.0,41.6 14.0,41.6" fill="#f6f0dc" opacity="0.4"/><polygon points="72.0,18.0 66.0,28.4 54.0,28.4 48.0,18.0 54.0,7.6 66.0,7.6" fill="#f3f3f3" opacity="0.6"/><polygon points="43.0,62.0 36.5,73.3 23.5,73.3 17.0,62.0 23.5,50.7 36.5,50.7" fill="#fbe3e6" opacity="0.4"/><polygon points="157.5,47.0 149.2,61.3 132.8,61.3 124.5,47.0 132.8,32.7 149.2,32.7" fill="#c9cbd0" opacity="0.95"/><polygon points="134.0,58.5 126.5,71.5 111.5,71.5 104.0,58.5 111.5,45.5 126.5,45.5" fill="#f7eeb0" opacity="0.9"/><polygon points="117.0,52.0 110.5,63.3 97.5,63.3 91.0,52.0 97.5,40.7 110.5,40.7" fill="#d4e8f0" opacity="0.85"/><polygon points="158.0,72.0 150.0,85.9 134.0,85.9 126.0,72.0 134.0,58.1 150.0,58.1" fill="#fadadd" opacity="0.9"/><polygon points="132.0,82.0 125.0,94.1 111.0,94.1 104.0,82.0 111.0,69.9 125.0,69.9" fill="#fbe6e8" opacity="0.7"/><polygon points="166.0,60.0 161.5,67.8 152.5,67.8 148.0,60.0 152.5,52.2 161.5,52.2" fill="#d6ecf2" opacity="0.8"/><circle cx="143" cy="58" r="0.800" fill="#fff"/><circle cx="143" cy="61" r="0.800" fill="#fff"/><circle cx="146" cy="55" r="0.800" fill="#fff"/><circle cx="146" cy="58" r="0.800" fill="#fff"/><circle cx="146" cy="61" r="0.800" fill="#fff"/><circle cx="149" cy="52" r="0.800" fill="#fff"/><circle cx="149" cy="55" r="0.800" fill="#fff"/><circle cx="149" cy="58" r="0.800" fill="#fff"/><circle cx="149" cy="61" r="0.800" fill="#fff"/><circle cx="152" cy="52" r="0.800" fill="#fff"/><circle cx="152" cy="55" r="0.800" fill="#fff"/><circle cx="152" cy="58" r="0.800" fill="#fff"/><circle cx="152" cy="61" r="0.800" fill="#fff"/><path d="M3 8l5-4.500h2.500l-5 4.500zM3 11l5-4.500h2.500l-5 4.500z" fill="#f2c230"/><path d="M5 13.500l3-2.500 2.500 2.500z" fill="#2a3550"/><text x="12.500" y="5.800" font-size="2.900" font-weight="bold" fill="#1c1c28" textLength="82" lengthAdjust="spacingAndGlyphs" font-family="'Liberation Sans',sans-serif">PROGRAM BANTUAN PENGEMBANGAN PROGRAM</text><text x="12.500" y="9.900" font-size="2.900" font-weight="bold" fill="#1c1c28" textLength="85.500" lengthAdjust="spacingAndGlyphs" font-family="'Liberation Sans',sans-serif">STUDI MEMENUHI STANDAR MUTU INTERNASIONAL</text><text x="12.500" y="13.900" font-size="2.900" font-weight="bold" fill="#1c1c28" textLength="21.500" lengthAdjust="spacingAndGlyphs" font-family="'Liberation Sans',sans-serif">TAHUN 2024</text><text x="7.800" y="18.500" font-size="3" font-style="italic" fill="#777" textLength="90.500" lengthAdjust="spacingAndGlyphs" font-family="'Liberation Sans',sans-serif">Workshop Pengelolaan Perguruan Tinggi dan Program Studi</text><text x="7.800" y="22.700" font-size="3" font-style="italic" fill="#777" textLength="37" lengthAdjust="spacingAndGlyphs" font-family="'Liberation Sans',sans-serif">Berstandar Internasional</text><text x="24" y="87" font-size="2.400" font-weight="bold" fill="#666" textLength="36" lengthAdjust="spacingAndGlyphs" font-family="'Liberation Sans',sans-serif">LPMPP UNHAS, 11 JULI 2024</text><g transform="translate(109,3)"><path d="M6 0.500q1.500 0 1.500 1.500l3.500-0.500q-1 2.500-3 3q2 2 1.500 5q-1 3.500-3.500 3.500t-3.500-3.500q-0.500-3 1.500-5q-2-0.500-3-3l3.500 0.500q0-1.500 1.500-1.500z" fill="#2e6a34"/><circle cx="6" cy="8.500" r="2.300" fill="#e8e2c8"/><path d="M4 2.500h4l-0.500-2h-3z" fill="#b03030"/><path d="M1 2q5-1.500 10 0" stroke="#d8b830" stroke-width="1" fill="none"/></g><circle cx="128.700" cy="9.600" r="7.300" fill="#1a76c2"/><circle cx="128.700" cy="9.600" r="5.400" fill="#fff" opacity="0.900"/><path d="M124.500 9q4.200-4.500 8.400 0q-1 4-4.200 5q-3.200-1-4.200-5z" fill="#1a76c2"/><circle cx="128.700" cy="7.500" r="1.400" fill="#fff"/><text x="138.500" y="7.300" font-size="4.600" font-weight="bold" fill="#2a86c8" textLength="18" lengthAdjust="spacingAndGlyphs" font-family="'Liberation Sans',sans-serif">Kampus</text><text x="138.500" y="11.600" font-size="4.600" font-weight="bold" fill="#2a86c8" textLength="18.500" lengthAdjust="spacingAndGlyphs" font-family="'Liberation Sans',sans-serif">Merdeka</text><rect x="138.500" y="12.800" width="18" height="1" fill="#e8b830"/></svg></g><g transform="translate(160,90)" filter="url(#tb)"><svg width="160" height="90" viewBox="0 0 160 90" overflow="hidden"><rect width="160" height="90" fill="#fdfdfd"/><polygon points="37.0,28.0 29.5,41.0 14.5,41.0 7.0,28.0 14.5,15.0 29.5,15.0" fill="#f4e6e6" opacity="0.4"/><polygon points="60.0,40.0 53.0,52.1 39.0,52.1 32.0,40.0 39.0,27.9 53.0,27.9" fill="#e6eef4" opacity="0.4"/><polygon points="20.0,52.0 14.0,62.4 2.0,62.4 -4.0,52.0 2.0,41.6 14.0,41.6" fill="#f6f0dc" opacity="0.4"/><polygon points="72.0,18.0 66.0,28.4 54.0,28.4 48.0,18.0 54.0,7.6 66.0,7.6" fill="#f3f3f3" opacity="0.6"/><polygon points="43.0,62.0 36.5,73.3 23.5,73.3 17.0,62.0 23.5,50.7 36.5,50.7" fill="#fbe3e6" opacity="0.4"/><polygon points="157.5,47.0 149.2,61.3 132.8,61.3 124.5,47.0 132.8,32.7 149.2,32.7" fill="#c9cbd0" opacity="0.95"/><polygon points="134.0,58.5 126.5,71.5 111.5,71.5 104.0,58.5 111.5,45.5 126.5,45.5" fill="#f7eeb0" opacity="0.9"/><polygon points="117.0,52.0 110.5,63.3 97.5,63.3 91.0,52.0 97.5,40.7 110.5,40.7" fill="#d4e8f0" opacity="0.85"/><polygon points="158.0,72.0 150.0,85.9 134.0,85.9 126.0,72.0 134.0,58.1 150.0,58.1" fill="#fadadd" opacity="0.9"/><polygon points="132.0,82.0 125.0,94.1 111.0,94.1 104.0,82.0 111.0,69.9 125.0,69.9" fill="#fbe6e8" opacity="0.7"/><polygon points="166.0,60.0 161.5,67.8 152.5,67.8 148.0,60.0 152.5,52.2 161.5,52.2" fill="#d6ecf2" opacity="0.8"/><circle cx="143" cy="58" r="0.800" fill="#fff"/><circle cx="143" cy="61" r="0.800" fill="#fff"/><circle cx="146" cy="55" r="0.800" fill="#fff"/><circle cx="146" cy="58" r="0.800" fill="#fff"/><circle cx="146" cy="61" r="0.800" fill="#fff"/><circle cx="149" cy="52" r="0.800" fill="#fff"/><circle cx="149" cy="55" r="0.800" fill="#fff"/><circle cx="149" cy="58" r="0.800" fill="#fff"/><circle cx="149" cy="61" r="0.800" fill="#fff"/><circle cx="152" cy="52" r="0.800" fill="#fff"/><circle cx="152" cy="55" r="0.800" fill="#fff"/><circle cx="152" cy="58" r="0.800" fill="#fff"/><circle cx="152" cy="61" r="0.800" fill="#fff"/><path d="M3 8l5-4.500h2.500l-5 4.500zM3 11l5-4.500h2.500l-5 4.500z" fill="#f2c230"/><path d="M5 13.500l3-2.500 2.500 2.500z" fill="#2a3550"/><text x="12.500" y="5.800" font-size="2.900" font-weight="bold" fill="#1c1c28" textLength="82" lengthAdjust="spacingAndGlyphs" font-family="'Liberation Sans',sans-serif">PROGRAM BANTUAN PENGEMBANGAN PROGRAM</text><text x="12.500" y="9.900" font-size="2.900" font-weight="bold" fill="#1c1c28" textLength="85.500" lengthAdjust="spacingAndGlyphs" font-family="'Liberation Sans',sans-serif">STUDI MEMENUHI STANDAR MUTU INTERNASIONAL</text><text x="12.500" y="13.900" font-size="2.900" font-weight="bold" fill="#1c1c28" textLength="21.500" lengthAdjust="spacingAndGlyphs" font-family="'Liberation Sans',sans-serif">TAHUN 2024</text><text x="7.800" y="18.500" font-size="3" font-style="italic" fill="#777" textLength="90.500" lengthAdjust="spacingAndGlyphs" font-family="'Liberation Sans',sans-serif">Workshop Pengelolaan Perguruan Tinggi dan Program Studi</text><text x="7.800" y="22.700" font-size="3" font-style="italic" fill="#777" textLength="37" lengthAdjust="spacingAndGlyphs" font-family="'Liberation Sans',sans-serif">Berstandar Internasional</text><text x="24" y="87" font-size="2.400" font-weight="bold" fill="#666" textLength="36" lengthAdjust="spacingAndGlyphs" font-family="'Liberation Sans',sans-serif">LPMPP UNHAS, 11 JULI 2024</text><g transform="translate(109,3)"><path d="M6 0.500q1.500 0 1.500 1.500l3.500-0.500q-1 2.500-3 3q2 2 1.500 5q-1 3.500-3.500 3.500t-3.500-3.500q-0.500-3 1.500-5q-2-0.500-3-3l3.500 0.500q0-1.500 1.500-1.500z" fill="#2e6a34"/><circle cx="6" cy="8.500" r="2.300" fill="#e8e2c8"/><path d="M4 2.500h4l-0.500-2h-3z" fill="#b03030"/><path d="M1 2q5-1.500 10 0" stroke="#d8b830" stroke-width="1" fill="none"/></g><circle cx="128.700" cy="9.600" r="7.300" fill="#1a76c2"/><circle cx="128.700" cy="9.600" r="5.400" fill="#fff" opacity="0.900"/><path d="M124.500 9q4.200-4.500 8.400 0q-1 4-4.200 5q-3.200-1-4.200-5z" fill="#1a76c2"/><circle cx="128.700" cy="7.500" r="1.400" fill="#fff"/><text x="138.500" y="7.300" font-size="4.600" font-weight="bold" fill="#2a86c8" textLength="18" lengthAdjust="spacingAndGlyphs" font-family="'Liberation Sans',sans-serif">Kampus</text><text x="138.500" y="11.600" font-size="4.600" font-weight="bold" fill="#2a86c8" textLength="18.500" lengthAdjust="spacingAndGlyphs" font-family="'Liberation Sans',sans-serif">Merdeka</text><rect x="138.500" y="12.800" width="18" height="1" fill="#e8b830"/></svg></g><rect x="320" y="90" width="160" height="90" fill="#9c9c9c"/><g filter="url(#tb2)"><rect x="386" y="126" width="22" height="16" rx="3" fill="#c8c8c8" transform="rotate(15 397 134)"/></g><g filter="url(#tb)"><svg x="0" y="0" width="160" height="90" overflow="hidden"><path d="M40 90q8-12 26-16q-2-20 4-28q6-6 16-5q10 1 13 9q3 10 2 24q16 4 22 16z" fill="#23242e"/><ellipse cx="82.500" cy="61" rx="11.500" ry="13.500" fill="#c69a82"/><path d="M72 57q4-5 10-5q7 0 11 5l1-6q-5-6-12-6q-8 0-11 7z" fill="#23242e"/><path d="M76 66q6 3 12 0q-6 6-12 0z" fill="#8a4a44"/><rect x="78" y="72" width="28" height="14" rx="6" fill="#2a2420"/></svg><svg x="160" y="0" width="160" height="90" overflow="hidden"><path d="M40 90q2-12 18-20q-6-30 0-52q4-16 18-18h28q12 2 16 20q4 24-2 50q14 8 42 20z" fill="url(#hij)"/><path d="M58 70q-6-30 0-52q4-16 18-18h28q12 2 16 20q4 24-2 50q-8 10-30 10t-30-10z" fill="#3a302e"/><path d="M64 40q0-22 26-22q25 0 25 22q0 20-8 28q-8 7-17 7t-17-7q-9-8-9-28z" fill="#b58468"/><path d="M70 33q6-3 13 0M97 33q7-3 13 0" stroke="#4a3228" stroke-width="1.800" fill="none"/><ellipse cx="77" cy="38" rx="4" ry="1.500" fill="#3a2620"/><ellipse cx="103" cy="38" rx="4" ry="1.500" fill="#3a2620"/><path d="M86 50q4 3 8 0" stroke="#8a5a48" stroke-width="1.500" fill="none"/><path d="M79 61q11-5 22 0q-11 6-22 0z" fill="#8e4a48"/></svg><svg x="320" y="0" width="160" height="90" overflow="hidden"><path d="M48 90l6-10q14-8 28-10l22-14q10-2 20 6q20 10 36 14v14z" fill="url(#batik)"/><path d="M62 62l4 16 22-8 4-12z" fill="#a87858"/><path d="M50 36q-3-20 6-28q10-9 28-8q18 1 24 12q5 12 0 30q-2 16-10 24q-8 6-18 4q-14-2-22-12q-7-10-8-22z" fill="#b88a6c"/><path d="M48 40q-6-26 8-34q12-8 30-6q20 2 24 14q4 10 0 24q-2-16-8-22q-12 2-26-2q-12 0-18 8q-4 8-4 22z" fill="#17171c"/><path d="M58 34q6-3 12-1M82 34q6-2 12 1" stroke="#2a1c18" stroke-width="2" fill="none"/><ellipse cx="65" cy="39" rx="3.500" ry="1.400" fill="#2a1c18"/><ellipse cx="88" cy="40" rx="3.500" ry="1.400" fill="#2a1c18"/><path d="M66 59q8-4 16-1" stroke="#4a2e28" stroke-width="2.200" fill="none"/><path d="M68 63q6 1 12 0" stroke="#8a5248" stroke-width="1.600" fill="none"/></svg><svg x="0" y="90" width="160" height="90" overflow="hidden"><path d="M86 92q2-22 20-25q18 1 22 25z" fill="#1e1c1e"/><path d="M100 92q4-10 14-8q8 2 8 8z" fill="#6a4a3c"/></svg></g><rect x="159.600" y="0" width="0.800" height="180" fill="#e8e8e8"/><rect x="319.600" y="0" width="0.800" height="180" fill="#e8e8e8"/><rect x="0" y="89.600" width="480" height="0.800" fill="#e0e0e0"/></g></svg>
<div class="abs" style="left:1251.0px;top:609.0px;width:61.0px;height:3.0px;background:#8a8a8a;border-radius:1.500px"></div>
<div class="abs" style="left:1044.5px;top:685px;width:126.0px;height:19px;border-radius:4.500px;background:rgba(30,30,30,0.740)"></div>
<svg class="abs" style="left:1049.5px;top:687.5px;" width="11" height="14" viewBox="0 0 11 14"><rect x="3.600" y="0.800" width="3.800" height="7.200" rx="1.900" fill="#dc3c32"/><path d="M1.800 6.500a3.700 3.700 0 0 0 7.400 0M5.500 10.500v2.200" stroke="#dc3c32" fill="none" stroke-width="1.100"/><path d="M1 12.500l9-11.500" stroke="#dc3c32" stroke-width="1.300"/></svg>
<span class="t" style="left:1067.0px;top:688.7px;font-size:13.6px;color:#fff;transform:scaleX(0.850);transform-origin:0 50%;">1_UIB_Dewi Kho...</span>
<div class="abs" style="left:1204.5px;top:685px;width:121.20000000000005px;height:19px;border-radius:4.500px;background:rgba(30,30,30,0.740)"></div>
<svg class="abs" style="left:1209.5px;top:687.5px;" width="11" height="14" viewBox="0 0 11 14"><rect x="3.600" y="0.800" width="3.800" height="7.200" rx="1.900" fill="#dc3c32"/><path d="M1.800 6.500a3.700 3.700 0 0 0 7.400 0M5.500 10.500v2.200" stroke="#dc3c32" fill="none" stroke-width="1.100"/><path d="M1 12.500l9-11.500" stroke="#dc3c32" stroke-width="1.300"/></svg>
<span class="t" style="left:1225.0px;top:688.7px;font-size:13.6px;color:#fff;transform:scaleX(0.852);transform-origin:0 50%;">1_UIB_Evi Silvana</span>
<div class="abs" style="left:1364px;top:685px;width:111px;height:19px;border-radius:4.500px;background:rgba(30,30,30,0.740)"></div>
<span class="t" style="left:1367.7px;top:688.7px;font-size:13.6px;color:#fff;transform:scaleX(0.923);transform-origin:0 50%;">1_Erwin -Unsulbar</span>
<div class="abs" style="left:1044.5px;top:774.6px;width:126.0px;height:19px;border-radius:4.500px;background:rgba(30,30,30,0.740)"></div>
<svg class="abs" style="left:1049.5px;top:777.1px;" width="11" height="14" viewBox="0 0 11 14"><rect x="3.600" y="0.800" width="3.800" height="7.200" rx="1.900" fill="#dc3c32"/><path d="M1.800 6.500a3.700 3.700 0 0 0 7.400 0M5.500 10.500v2.200" stroke="#dc3c32" fill="none" stroke-width="1.100"/><path d="M1 12.500l9-11.500" stroke="#dc3c32" stroke-width="1.300"/></svg>
<span class="t" style="left:1067.0px;top:778.3px;font-size:13.6px;color:#fff;transform:scaleX(0.834);transform-origin:0 50%;">1_UIB_Renny Ch...</span>
<div class="abs" style="left:1204.5px;top:774.6px;width:115.5px;height:19px;border-radius:4.500px;background:rgba(30,30,30,0.740)"></div>
<svg class="abs" style="left:1209.5px;top:777.1px;" width="11" height="14" viewBox="0 0 11 14"><rect x="3.600" y="0.800" width="3.800" height="7.200" rx="1.900" fill="#dc3c32"/><path d="M1.800 6.500a3.700 3.700 0 0 0 7.400 0M5.500 10.500v2.200" stroke="#dc3c32" fill="none" stroke-width="1.100"/><path d="M1 12.500l9-11.500" stroke="#dc3c32" stroke-width="1.300"/></svg>
<span class="t" style="left:1225.0px;top:778.3px;font-size:13.6px;color:#fff;transform:scaleX(0.923);transform-origin:0 50%;">1. Andina Fasha</span>
<div class="abs" style="left:1364px;top:774.6px;width:89px;height:19px;border-radius:4.500px;background:rgba(30,30,30,0.740)"></div>
<span class="t" style="left:1366.7px;top:778.3px;font-size:13.6px;color:#fff;transform:scaleX(0.893);transform-origin:0 50%;">Wiwiek LPMPP</span>
<svg class="abs" style="left:1575.0px;top:697.0px;" width="11" height="19" viewBox="0 0 11 19"><path d="M1.800 1.800l7 7.700-7 7.700" stroke="#fff" fill="none" stroke-width="2.800"/></svg>
<!-- bar -->
<div class="abs" style="left:0.0px;top:801.0px;width:1600.0px;height:59.0px;background:#000;"></div>
<svg class="abs" style="left:40.0px;top:810.0px;" width="25" height="26" viewBox="0 0 25 26"><rect x="8.300" y="2" width="7.400" height="13.500" rx="3.700" stroke="#fff" fill="none" stroke-width="1.600" stroke-linecap="round" stroke-linejoin="round"/><path d="M5 12.500a7 7 0 0 0 14 0M12 19.500v4.500M8 24.500h8" stroke="#fff" fill="none" stroke-width="1.600" stroke-linecap="round" stroke-linejoin="round"/><path d="M1.500 24l21.500-22" stroke="#e8235f" stroke-width="2.200" stroke-linecap="round"/></svg>
<svg class="abs" style="left:80.0px;top:820.5px;" width="8" height="5" viewBox="0 0 8 5"><path d="M0.800 4.200l3.200-3.400 3.200 3.400" stroke="#ccc" fill="none" stroke-width="1.200"/></svg>
<span class="t" style="left:36.5px;top:840.3px;font-size:12.8px;color:#d6d6de;transform:scaleX(0.962);transform-origin:0 50%;-webkit-text-stroke:0.2px #d6d6de;">Audio</span>
<svg class="abs" style="left:131.0px;top:810.0px;" width="28" height="26" viewBox="0 0 28 26"><rect x="3" y="6" width="15.500" height="15" rx="2.500" stroke="#fff" fill="none" stroke-width="1.600" stroke-linecap="round" stroke-linejoin="round"/><path d="M18.500 12l6.500-4v11l-6.500-4" stroke="#fff" fill="none" stroke-width="1.600" stroke-linecap="round" stroke-linejoin="round"/><path d="M2 24l23.500-22" stroke="#e8235f" stroke-width="2.200" stroke-linecap="round"/></svg>
<svg class="abs" style="left:178.0px;top:820.5px;" width="8" height="5" viewBox="0 0 8 5"><path d="M0.800 4.200l3.200-3.400 3.200 3.400" stroke="#ccc" fill="none" stroke-width="1.200"/></svg>
<span class="t" style="left:129.5px;top:840.3px;font-size:12.8px;color:#d6d6de;transform:scaleX(0.938);transform-origin:0 50%;-webkit-text-stroke:0.2px #d6d6de;">Video</span>
<svg class="abs" style="left:467.0px;top:813.0px;" width="22" height="20" viewBox="0 0 22 20"><circle cx="7.500" cy="5" r="3.700" stroke="#fff" fill="none" stroke-width="1.600" stroke-linecap="round" stroke-linejoin="round"/><path d="M1 18.500v-2.500a4.500 4.500 0 0 1 4.500-4.500h4a4.500 4.500 0 0 1 4.500 4.500v2.500z" stroke="#fff" fill="none" stroke-width="1.600" stroke-linecap="round" stroke-linejoin="round"/><circle cx="16.300" cy="8.500" r="2.800" stroke="#fff" fill="none" stroke-width="1.600" stroke-linecap="round" stroke-linejoin="round"/><path d="M16.500 14h1.500a3.200 3.200 0 0 1 3.200 3.200v1.300h-4" stroke="#fff" fill="none" stroke-width="1.600" stroke-linecap="round" stroke-linejoin="round"/></svg>
<span class="t" style="left:494.0px;top:814.5px;font-size:12px;color:#ddd;transform:scaleX(0.899);transform-origin:0 50%;">15</span>
<span class="t" style="left:447.5px;top:840.3px;font-size:12.8px;color:#d6d6de;transform:scaleX(0.920);transform-origin:0 50%;-webkit-text-stroke:0.2px #d6d6de;">Participants</span>
<svg class="abs" style="left:576.0px;top:811.0px;" width="24" height="24" viewBox="0 0 24 24"><path d="M7 6v-1.500a3 3 0 0 1 3-3h9.500a3 3 0 0 1 3 3v7a3 3 0 0 1-3 3h-1" stroke="#fff" fill="none" stroke-width="1.600" stroke-linecap="round" stroke-linejoin="round"/><path d="M4 6.500h10.500a3 3 0 0 1 3 3v6.500a3 3 0 0 1-3 3h-6l-4.500 3.500v-3.500a3 3 0 0 1-3-3v-6.500a3 3 0 0 1 3-3z" stroke="#fff" fill="none" stroke-width="1.600" stroke-linecap="round" stroke-linejoin="round"/><circle cx="6" cy="12.800" r="1" fill="#fff"/><circle cx="9.300" cy="12.800" r="1" fill="#fff"/><circle cx="12.600" cy="12.800" r="1" fill="#fff"/></svg>
<svg class="abs" style="left:617.0px;top:820.5px;" width="8" height="5" viewBox="0 0 8 5"><path d="M0.800 4.200l3.200-3.400 3.200 3.400" stroke="#ccc" fill="none" stroke-width="1.200"/></svg>
<span class="t" style="left:576.0px;top:840.3px;font-size:12.8px;color:#d6d6de;transform:scaleX(0.888);transform-origin:0 50%;-webkit-text-stroke:0.2px #d6d6de;">Chat</span>
<svg class="abs" style="left:660.0px;top:812.0px;" width="26" height="23" viewBox="0 0 26 23"><path d="M13 21.500q-11.500-8-11.500-14a5.500 5.500 0 0 1 11.500-2a5.500 5.500 0 0 1 11.500 2q0 6-11.500 14z" stroke="#fff" fill="none" stroke-width="1.600" stroke-linecap="round" stroke-linejoin="round"/></svg>
<svg class="abs" style="left:697.0px;top:820.5px;" width="8" height="5" viewBox="0 0 8 5"><path d="M0.800 4.200l3.200-3.400 3.200 3.400" stroke="#ccc" fill="none" stroke-width="1.200"/></svg>
<span class="t" style="left:658.0px;top:840.3px;font-size:12.8px;color:#d6d6de;transform:scaleX(0.867);transform-origin:0 50%;-webkit-text-stroke:0.2px #d6d6de;">React</span>
<svg class="abs" style="left:746.0px;top:810.0px;" width="22" height="26" viewBox="0 0 22 26"><path d="M4.500 14v-8.500a1.600 1.600 0 0 1 3.200 0v6.500M7.700 11v-8a1.600 1.600 0 0 1 3.200 0v8M10.900 11v-7a1.600 1.600 0 0 1 3.200 0v7.500M14.100 12v-5a1.600 1.600 0 0 1 3.200 0v7.500l1.800-2.800a1.700 1.700 0 0 1 2.600 1.800l-3.500 7.500q-2 4-6.500 4q-7.200 0-7.200-8v-3z" stroke="#fff" fill="none" stroke-width="1.600" stroke-linecap="round" stroke-linejoin="round" stroke-width="1.500"/></svg>
<svg class="abs" style="left:784.5px;top:820.5px;" width="8" height="5" viewBox="0 0 8 5"><path d="M0.800 4.200l3.200-3.400 3.200 3.400" stroke="#ccc" fill="none" stroke-width="1.200"/></svg>
<span class="t" style="left:728.5px;top:840.3px;font-size:12.8px;color:#d6d6de;transform:scaleX(0.865);transform-origin:0 50%;-webkit-text-stroke:0.2px #d6d6de;">Raise hand</span>
<div class="abs" style="left:838px;top:813px;width:24px;height:20px;border-radius:4.500px;background:#20e070"></div>
<svg class="abs" style="left:844.0px;top:816.0px;" width="12" height="14" viewBox="0 0 12 14"><path d="M6 12.500v-9.500M1.800 6.500l4.200-4.300 4.200 4.300" stroke="#000" fill="none" stroke-width="2.600" stroke-linejoin="round" stroke-linecap="round"/></svg>
<svg class="abs" style="left:883.0px;top:820.5px;" width="8" height="5" viewBox="0 0 8 5"><path d="M0.800 4.200l3.200-3.400 3.200 3.400" stroke="#ccc" fill="none" stroke-width="1.200"/></svg>
<span class="t" style="left:835.5px;top:840.3px;font-size:12.8px;color:#d6d6de;transform:scaleX(0.864);transform-origin:0 50%;-webkit-text-stroke:0.2px #d6d6de;">Share</span>
<svg class="abs" style="left:927.0px;top:811.0px;" width="24" height="24" viewBox="0 0 24 24"><path d="M2 9v-3.500a3.500 3.500 0 0 1 3.500-3.500h3.500M22 15v3.500a3.500 3.500 0 0 1-3.500 3.500h-3.500" stroke="#fff" fill="none" stroke-width="1.600" stroke-linecap="round" stroke-linejoin="round"/><circle cx="17.500" cy="6" r="4" stroke="#fff" fill="none" stroke-width="1.600" stroke-linecap="round" stroke-linejoin="round"/><circle cx="6" cy="17.500" r="4" stroke="#fff" fill="none" stroke-width="1.600" stroke-linecap="round" stroke-linejoin="round"/></svg>
<svg class="abs" style="left:963.0px;top:820.5px;" width="8" height="5" viewBox="0 0 8 5"><path d="M0.800 4.200l3.200-3.400 3.200 3.400" stroke="#ccc" fill="none" stroke-width="1.200"/></svg>
<span class="t" style="left:925.5px;top:840.3px;font-size:12.8px;color:#d6d6de;transform:scaleX(0.908);transform-origin:0 50%;-webkit-text-stroke:0.2px #d6d6de;">Apps</span>
<div class="abs" style="left:1017px;top:811px;width:11.200px;height:11.200px;border-radius:2px;background:#fff"></div>
<div class="abs" style="left:1017px;top:823.8px;width:11.200px;height:11.200px;border-radius:2px;background:#fff"></div>
<div class="abs" style="left:1029.8px;top:811px;width:11.200px;height:11.200px;border-radius:2px;background:#fff"></div>
<div class="abs" style="left:1029.8px;top:823.8px;width:11.200px;height:11.200px;border-radius:2px;background:#fff"></div>
<span class="t" style="left:988.0px;top:840.3px;font-size:12.8px;color:#d6d6de;transform:scaleX(0.919);transform-origin:0 50%;-webkit-text-stroke:0.2px #d6d6de;">Breakout rooms</span>
<svg class="abs" style="left:1118.0px;top:810.0px;" width="52" height="26" viewBox="0 0 52 26"><rect x="1.500" y="1.500" width="22" height="23" rx="4.500" stroke="#fff" fill="none" stroke-width="1.600" stroke-linecap="round" stroke-linejoin="round"/><rect x="26.500" y="1.500" width="22.500" height="23" rx="4.500" stroke="#fff" fill="none" stroke-width="1.600" stroke-linecap="round" stroke-linejoin="round"/><rect x="8.800" y="9" width="2.200" height="8" fill="#fff"/><rect x="14" y="9" width="2.200" height="8" fill="#fff"/><rect x="33.500" y="8.500" width="9" height="9" rx="2" fill="#fff"/></svg>
<span class="t" style="left:1088.0px;top:842.3px;font-size:12.8px;color:#d6d6de;transform:scaleX(0.926);transform-origin:0 50%;-webkit-text-stroke:0.2px #d6d6de;">Pause/stop recording</span>
<svg class="abs" style="left:1238.0px;top:811.0px;" width="24" height="24" viewBox="0 0 24 24"><circle cx="12" cy="12" r="11" stroke="#fff" fill="none" stroke-width="1.600" stroke-linecap="round" stroke-linejoin="round"/><circle cx="6.800" cy="12" r="1.300" fill="#fff"/><circle cx="12" cy="12" r="1.300" fill="#fff"/><circle cx="17.200" cy="12" r="1.300" fill="#fff"/></svg>
<span class="t" style="left:1236.5px;top:840.3px;font-size:12.8px;color:#d6d6de;transform:scaleX(0.943);transform-origin:0 50%;-webkit-text-stroke:0.2px #d6d6de;">More</span>
<svg class="abs" style="left:1540.0px;top:810.0px;" width="26" height="26" viewBox="0 0 26 26"><path d="M10 2.500l13.500-1.500v19l-5 3.500v-19l5-3" stroke="#e8235f" fill="none" stroke-width="1.500" stroke-linejoin="round"/><circle cx="9.500" cy="6" r="2.200" stroke="#fff" fill="none" stroke-width="1.600" stroke-linecap="round" stroke-linejoin="round" stroke-width="1.400"/><path d="M7.500 10.500l-3 2.500v3.500M7.500 10.500l3 0.500 2 3 2.500 1M7.500 10.500l-0.500 6 3.500 3 0.500 4M7 17l-1.500 4-3 3" stroke="#fff" fill="none" stroke-width="1.600" stroke-linecap="round" stroke-linejoin="round" stroke-width="1.400"/></svg>
<span class="t" style="left:1521.5px;top:840.3px;font-size:12.8px;color:#d6d6de;transform:scaleX(0.902);transform-origin:0 50%;-webkit-text-stroke:0.2px #d6d6de;">Leave room</span>
<!-- task -->
<div class="abs" style="left:0;top:860px;width:1600px;height:40px;background:linear-gradient(90deg,#22373f 0%,#22363f 25%,#21343f 50%,#1f2e41 75%,#1e2b42 100%)"></div>
<div class="abs" style="left:16.0px;top:872.0px;width:7.5px;height:7.5px;background:#fff;"></div>
<div class="abs" style="left:24.5px;top:872.0px;width:7.5px;height:7.5px;background:#fff;"></div>
<div class="abs" style="left:16.0px;top:880.5px;width:7.5px;height:7.5px;background:#fff;"></div>
<div class="abs" style="left:24.5px;top:880.5px;width:7.5px;height:7.5px;background:#fff;"></div>
<svg class="abs" style="left:60.0px;top:868.0px;" width="24" height="24" viewBox="0 0 24 24"><circle cx="14" cy="9.500" r="6.300" stroke="#fff" fill="none" stroke-width="2"/><path d="M9.500 14l-7 7.500" stroke="#fff" stroke-width="2.400" stroke-linecap="round"/></svg>
<div class="abs" style="left:102.0px;top:872.0px;width:1.0px;height:16.0px;background:#5a6a72;"></div>
<div class="abs" style="left:104.5px;top:872.0px;width:1.0px;height:16.0px;background:#5a6a72;"></div>
<svg class="abs" style="left:131.0px;top:868.0px;" width="24" height="24" viewBox="0 0 24 24"><defs><linearGradient id="eg" x1="0" y1="0" x2="1" y2="1"><stop offset="0" stop-color="#35c1f1"/><stop offset="0.500" stop-color="#1b9de2"/><stop offset="1" stop-color="#0c59a4"/></linearGradient><linearGradient id="eg2" x1="0" y1="0" x2="1" y2="0"><stop offset="0" stop-color="#2fc4e8"/><stop offset="1" stop-color="#6bd44a"/></linearGradient></defs><circle cx="12" cy="12" r="11.500" fill="url(#eg)"/><path d="M1 10a11.500 11.500 0 0 1 22 1q0 4-4 4.500h-5q2-1.500 1.500-4a5 5 0 0 0-9 1q-2.500-4-5.500-2.500z" fill="url(#eg2)"/><path d="M6.500 13a6 6 0 0 0 8 8q-6 1-8-8z" fill="#0a3f80"/></svg>
<svg class="abs" style="left:181.0px;top:870.0px;" width="23" height="20" viewBox="0 0 23 20"><path d="M0.500 2h8l2 2.500h12v14h-22z" fill="#f7c54a"/><path d="M0.500 6.500h22v12.500h-22z" fill="#fbdc73"/><path d="M5 14h13v5h-13z" fill="#3f8ad8"/><path d="M8 16h7v3h-7z" fill="#fbdc73"/></svg>
<div class="abs" style="left:229.0px;top:868.0px;width:24.0px;height:24.0px;background:#e6431f;"></div>
<svg class="abs" style="left:232.0px;top:870.0px;" width="18" height="20" viewBox="0 0 18 20"><path d="M2 18q-1-8 2-12.500l4-3.500q-1 7 1 14.500zM10 17q3-6 1-14l5-1.500q2 8-1 15z" fill="#fff"/></svg>
<div class="abs" style="left:266.0px;top:860.0px;width:48.0px;height:40.0px;background:#46585f;"></div>
<svg class="abs" style="left:278.0px;top:868.0px;" width="24" height="24" viewBox="0 0 24 24"><ellipse cx="10.500" cy="14" rx="10" ry="8" fill="#d7dfe6"/><circle cx="16" cy="17.500" r="2.800" fill="#41545c"/><circle cx="5" cy="13" r="1.900" fill="#e8473f"/><circle cx="8.500" cy="9.500" r="1.900" fill="#f5b431"/><circle cx="13.500" cy="9.500" r="1.900" fill="#5cb85c"/><circle cx="7" cy="17.500" r="1.900" fill="#3f8ad8"/><path d="M22.500 1l-7 13-2.500 1.500 0.500-3z" fill="#e8963a"/><path d="M22.500 1l-2.500 4.500-1.500-1z" fill="#8a5a2b"/></svg>
<svg class="abs" style="left:327.0px;top:868.0px;" width="24" height="24" viewBox="0 0 24 24"><rect x="2" y="3" width="20" height="14" rx="1" fill="#c9d2d8" stroke="#8a959c" stroke-width="0.800"/><rect x="4" y="5" width="16" height="10" fill="#3a7fc2"/><path d="M5 11l3-3 2 4 3-6 2 5 4-2" stroke="#d6ecff" fill="none" stroke-width="1"/><path d="M9 17h6l1.500 4h-9z" fill="#a8b2b8"/><rect x="6" y="21" width="12" height="1.500" fill="#8a959c"/></svg>
<div class="abs" style="left:375px;top:868px;width:24px;height:24px;border-radius:50%;background:linear-gradient(180deg,#2f7cfb,#0a48dc)"></div>
<span class="t" style="left:379.0px;top:873.5px;font-size:12.5px;color:#fff;font-weight:bold;transform:scaleX(0.921);transform-origin:0 50%;">zm</span>
<div class="abs" style="left:424.5px;top:868px;width:24px;height:24px;border-radius:50%;background:linear-gradient(180deg,#2f7cfb,#0a48dc)"></div>
<span class="t" style="left:428.5px;top:873.5px;font-size:12.5px;color:#fff;font-weight:bold;transform:scaleX(0.921);transform-origin:0 50%;">zm</span>
<svg class="abs" style="left:473.5px;top:868.0px;" width="27" height="27" viewBox="0 0 27 27"><circle cx="12" cy="12" r="11.500" fill="#e34133"/><path d="M12 12l-10-5.700a11.500 11.500 0 0 0 5 16.200z" fill="#2da94f"/><path d="M12 12l-5 10.500a11.500 11.500 0 0 0 16-13.500h-11z" fill="#fcc31e"/><circle cx="12" cy="12" r="5.200" fill="#fff"/><circle cx="12" cy="12" r="4.100" fill="#4a8af4"/><circle cx="19.500" cy="19.500" r="7" fill="#e8e4d8"/><circle cx="19.500" cy="19.500" r="4.500" fill="#8a9a5a"/><circle cx="19.500" cy="19" r="2.200" fill="#d8c060"/></svg>
<div class="abs" style="left:172.0px;top:897.5px;width:40.0px;height:2.5px;background:#76b9ed;"></div>
<div class="abs" style="left:266.0px;top:897.5px;width:48.0px;height:2.5px;background:#76b9ed;"></div>
<div class="abs" style="left:319.0px;top:897.5px;width:40.0px;height:2.5px;background:#76b9ed;"></div>
<div class="abs" style="left:368.0px;top:897.5px;width:40.0px;height:2.5px;background:#76b9ed;"></div>
<div class="abs" style="left:417.0px;top:897.5px;width:40.0px;height:2.5px;background:#76b9ed;"></div>
<div class="abs" style="left:466.0px;top:897.5px;width:40.0px;height:2.5px;background:#76b9ed;"></div>
<div class="abs" style="left:212.0px;top:897.5px;width:3.0px;height:2.5px;background:#5a94c4;"></div>
<div class="abs" style="left:408.0px;top:897.5px;width:3.0px;height:2.5px;background:#5a94c4;"></div>
<div class="abs" style="left:1100.0px;top:872.0px;width:1.0px;height:16.0px;background:#55626e;"></div>
<div class="abs" style="left:1102.5px;top:872.0px;width:1.0px;height:16.0px;background:#55626e;"></div>
<span class="t" style="left:1114.5px;top:874.3px;font-size:12.5px;color:#e8e8e8;transform:scaleX(0.927);transform-origin:0 50%;">Desktop</span>
<span class="t" style="left:1163.0px;top:863.7px;font-size:11px;color:#fff;font-weight:bold;transform:scaleX(1.471);transform-origin:0 50%;">»</span>
<div class="abs" style="left:1263.500px;top:871px;width:18px;height:18px;border-radius:50%;background:radial-gradient(circle at 35% 35%,#ffc83a,#f57f17)"></div>
<div class="abs" style="left:1275px;top:869.500px;width:9px;height:9px;border-radius:50%;background:#d93a3a"></div>
<span class="t" style="left:1278.0px;top:871.2px;font-size:6.5px;color:#fff;transform:scaleX(0.830);transform-origin:0 50%;">1</span>
<span class="t" style="left:1294.0px;top:872.5px;font-size:15px;color:#fff;transform:scaleX(0.865);transform-origin:0 50%;">31°C</span>
<span class="t" style="left:1332.0px;top:872.5px;font-size:15px;color:#fff;transform:scaleX(0.857);transform-origin:0 50%;">Cerah</span>
<svg class="abs" style="left:1391.0px;top:876.0px;" width="12" height="8" viewBox="0 0 12 8"><path d="M1 7l5-5.500 5 5.500" stroke="#fff" fill="none" stroke-width="1.500"/></svg>
<svg class="abs" style="left:1415.0px;top:871.0px;" width="12" height="19" viewBox="0 0 12 19"><rect x="2.800" y="0.500" width="6.400" height="11" rx="3" fill="#fff"/><path d="M0.800 8.500a5.200 5.200 0 0 0 10.400 0M6 14v3.500M3 17.800h6" stroke="#fff" fill="none" stroke-width="1.200"/></svg>
<svg class="abs" style="left:1440.0px;top:872.0px;" width="16" height="16" viewBox="0 0 16 16"><g stroke="#cfd6dc" fill="none" stroke-width="1.300"><path d="M1.500 15a13 13 0 0 1 13-13"/><path d="M5 15a9.500 9.500 0 0 1 9.500-9.500"/><path d="M8.500 15a6 6 0 0 1 6-6"/></g><circle cx="13" cy="13.500" r="1.600" fill="#fff"/></svg>
<svg class="abs" style="left:1461.0px;top:872.0px;" width="18" height="16" viewBox="0 0 18 16"><path d="M1 5.500h3l4-3.500v12l-4-3.500h-3z" stroke="#fff" fill="none" stroke-width="1.200" stroke-linejoin="round"/><path d="M10.500 5.500a3.500 3.500 0 0 1 0 5M12.500 3.500a6.500 6.500 0 0 1 0 9" stroke="#fff" fill="none" stroke-width="1.100"/><path d="M14.700 1.800a9 9 0 0 1 0 12.400" stroke="#8a949c" fill="none" stroke-width="1.100"/></svg>
<span class="t" style="left:1490.0px;top:864.1px;font-size:13px;color:#fff;transform:scaleX(0.863);transform-origin:0 50%;">12:18 PM</span>
<span class="t" style="left:1490.5px;top:883.1px;font-size:13px;color:#fff;transform:scaleX(0.876);transform-origin:0 50%;">17-Jul-24</span>
<svg class="abs" style="left:1559.0px;top:873.0px;" width="17" height="16" viewBox="0 0 17 16"><path d="M0.800 0.800h15.400v10.500h-5l-2.700 3.200-2.700-3.200h-5z" stroke="#fff" fill="none" stroke-width="1.300"/></svg>
<div class="abs" style="left:1595.0px;top:860.0px;width:1.0px;height:40.0px;background:#6a7682;"></div>
</body>
</html>
